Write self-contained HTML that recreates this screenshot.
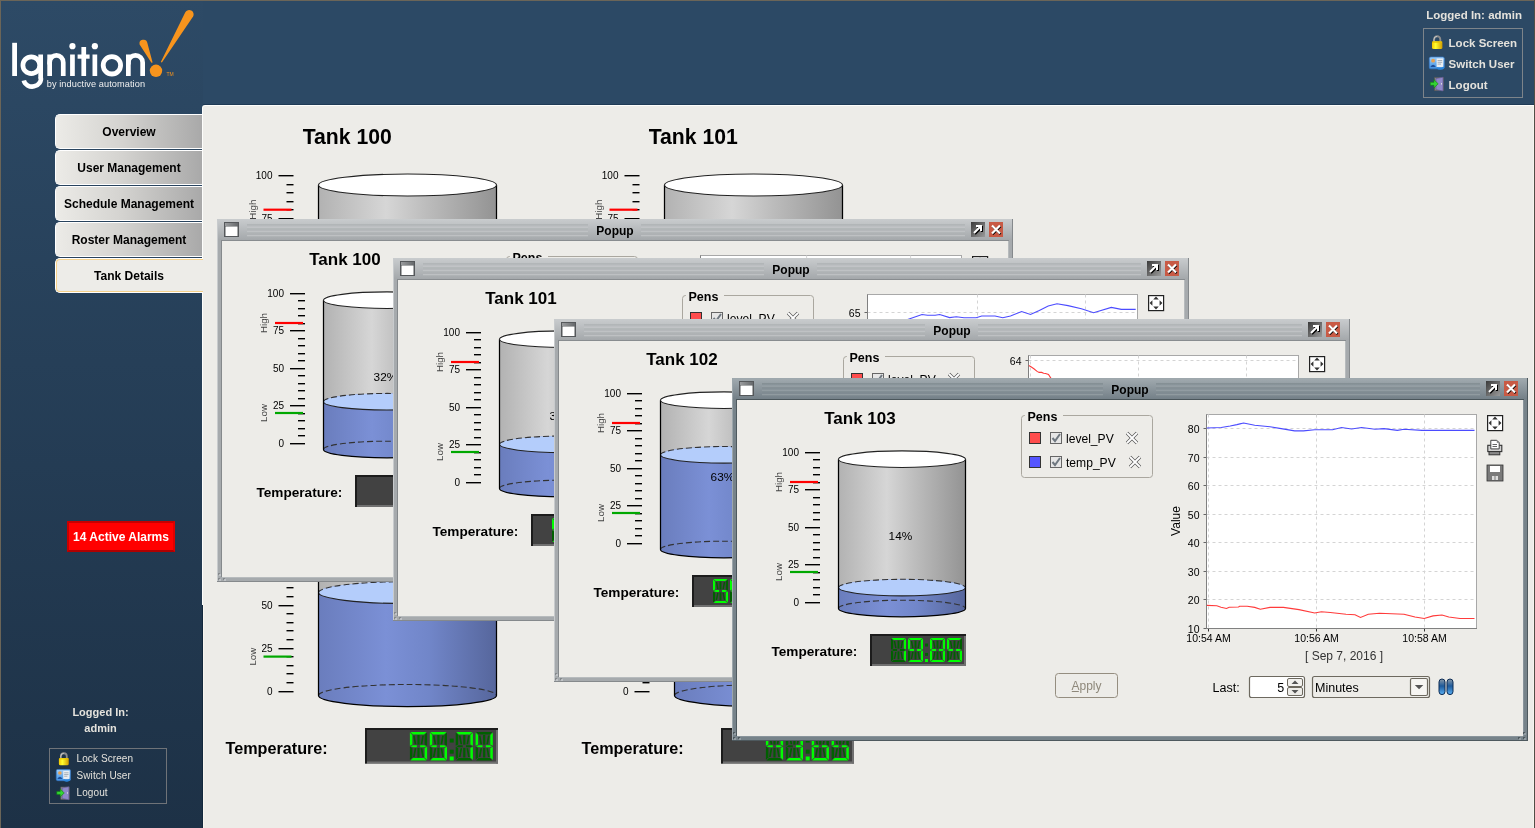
<!DOCTYPE html><html><head><meta charset="utf-8"><style>html,body{margin:0;padding:0;} svg,div{will-change:transform;}body{width:1535px;height:828px;overflow:hidden;position:relative;background:#2c4965;font-family:"Liberation Sans", sans-serif;}</style></head><body><div style="position:absolute;left:0;top:0;width:1535px;height:828px;background:linear-gradient(to bottom,#2d4a66 0px,#1d3146 828px)"></div><div style="position:absolute;left:203px;top:0;width:1332px;height:105px;background:#2c4965"></div><div style="position:absolute;left:0;top:0;width:1535px;height:1px;background:#6b6558"></div><div style="position:absolute;left:0;top:0;width:1px;height:828px;background:#6b6558"></div><div style="position:absolute;left:1534px;top:0;width:1px;height:828px;background:#524e46"></div><div style="position:absolute;left:203px;top:104px;width:1331px;height:1px;background:#1f3a55"></div><div style="position:absolute;left:202px;top:105px;width:1332px;height:723px;background:#fdfdfb;border-top-left-radius:3px"></div><div style="position:absolute;left:203px;top:106px;width:1330px;height:722px;background:#edece8;border-top-left-radius:2px"></div><div style="position:absolute;left:202px;top:605px;width:1px;height:223px;background:#13283c"></div><div style="position:absolute;left:203px;top:605px;width:1px;height:223px;background:#f8f5ef"></div><div style="position:absolute;left:1533px;top:106px;width:1px;height:722px;background:#f6f4ef"></div><svg style="position:absolute;left:0;top:0" width="210" height="100" font-family='"Liberation Sans", sans-serif'><rect x="12.2" y="42.8" width="4.8" height="33.2" fill="#ffffff"/><circle cx="31.3" cy="65.2" r="8.4" fill="none" stroke="#ffffff" stroke-width="4.7"/><rect x="38.3" y="54.5" width="4.7" height="24" fill="#ffffff"/><path d="M40.65,77 A8.4,7.6 0 0 1 23.8,80.5" fill="none" stroke="#ffffff" stroke-width="4.6"/><path d="M49.65,76 V62.5 A6.8,7.2 0 0 1 63.25,62.5 V76" fill="none" stroke="#ffffff" stroke-width="4.7"/><rect x="47.3" y="54.5" width="4.7" height="10" fill="#ffffff"/><rect x="70.1" y="54.5" width="4.7" height="21.5" fill="#ffffff"/><circle cx="72.45" cy="46.2" r="3.1" fill="#ffffff"/><rect x="81.4" y="47" width="4.7" height="29" fill="#ffffff"/><rect x="77.6" y="54.5" width="12" height="4.2" fill="#ffffff"/><rect x="92.5" y="54.5" width="4.7" height="21.5" fill="#ffffff"/><circle cx="94.85" cy="46.2" r="3.1" fill="#ffffff"/><circle cx="111.9" cy="65.3" r="8.7" fill="none" stroke="#ffffff" stroke-width="4.8"/><path d="M128.35,76 V62.5 A7.15,7.2 0 0 1 142.65,62.5 V76" fill="none" stroke="#ffffff" stroke-width="4.7"/><rect x="126" y="54.5" width="4.7" height="10" fill="#ffffff"/><path d="M139.6,44.5 A3.9,3.9 0 0 1 147.3,42.8 L152.6,62.5 L151.4,62.7 Z" fill="#f7941d"/><path d="M185.3,12.3 A4.3,4.3 0 0 1 193.1,16.6 L161.9,62.6 L160.8,62.1 Z" fill="#f7941d"/><circle cx="156" cy="70.8" r="6.2" fill="#f7941d"/><text x="166.5" y="76" font-size="5" fill="#f7941d">TM</text><text x="46.7" y="87" font-size="9.2" fill="#f0f0f0" textLength="98.3" lengthAdjust="spacing">by inductive automation</text></svg><div style="position:absolute;left:55px;top:114px;width:146px;height:33px;border:1px solid #fff;border-right:none;border-radius:5px 0 0 5px;background:linear-gradient(to right,#ecebe7 0%,#d4d3d0 45%,#a9a9a9 100%)"></div><div style="position:absolute;left:55px;top:114px;width:148px;height:35px;line-height:37px;text-align:center;font-weight:bold;font-size:12px;color:#000">Overview</div><div style="position:absolute;left:55px;top:150px;width:146px;height:33px;border:1px solid #fff;border-right:none;border-radius:5px 0 0 5px;background:linear-gradient(to right,#ecebe7 0%,#d4d3d0 45%,#a9a9a9 100%)"></div><div style="position:absolute;left:55px;top:150px;width:148px;height:35px;line-height:37px;text-align:center;font-weight:bold;font-size:12px;color:#000">User Management</div><div style="position:absolute;left:55px;top:186px;width:146px;height:33px;border:1px solid #fff;border-right:none;border-radius:5px 0 0 5px;background:linear-gradient(to right,#ecebe7 0%,#d4d3d0 45%,#a9a9a9 100%)"></div><div style="position:absolute;left:55px;top:186px;width:148px;height:35px;line-height:37px;text-align:center;font-weight:bold;font-size:12px;color:#000">Schedule Management</div><div style="position:absolute;left:55px;top:222px;width:146px;height:33px;border:1px solid #fff;border-right:none;border-radius:5px 0 0 5px;background:linear-gradient(to right,#ecebe7 0%,#d4d3d0 45%,#a9a9a9 100%)"></div><div style="position:absolute;left:55px;top:222px;width:148px;height:35px;line-height:37px;text-align:center;font-weight:bold;font-size:12px;color:#000">Roster Management</div><div style="position:absolute;left:55px;top:258px;width:147px;height:33px;border:1px solid #fff;border-right:none;border-radius:5px 0 0 5px;background:#edece8"></div><div style="position:absolute;left:56px;top:259px;width:146px;height:31px;border:1px solid #f6d28c;border-right:none;border-radius:4px 0 0 4px;"></div><div style="position:absolute;left:55px;top:258px;width:148px;height:35px;line-height:37px;text-align:center;font-weight:bold;font-size:12px;color:#000">Tank Details</div><div style="position:absolute;left:67px;top:521px;width:104px;height:27px;background:#ff0000;border:2px solid #c80000;border-right-color:#e00000;border-bottom-color:#b00000"></div><div style="position:absolute;left:67px;top:522px;width:108px;height:31px;line-height:31px;text-align:center;font-weight:bold;font-size:12px;color:#fff">14 Active Alarms</div><div style="position:absolute;left:50px;top:705px;width:101px;text-align:center;font-weight:bold;font-size:11px;line-height:15.5px;color:#e4e2dc">Logged In:<br>admin</div><div style="position:absolute;left:49px;top:748px;width:116px;height:54px;border:1px solid #6f7378"></div><svg style="position:absolute;left:0;top:700px" width="210" height="110" font-family='"Liberation Sans", sans-serif'><g transform="translate(58.6,52) scale(0.95)"><defs><linearGradient id="lk1" x1="0" y1="0" x2="1" y2="0"><stop offset="0" stop-color="#f5c800"/><stop offset="0.35" stop-color="#ffff30"/><stop offset="1" stop-color="#d09a00"/></linearGradient></defs><path d="M2.4,7.5 V4.6 A3.1,3.3 0 0 1 8.6,4.6 V7.5" fill="none" stroke="#8c8c8c" stroke-width="1.9"/><path d="M2.2,6 V4.6 A3.1,3.3 0 0 1 5.5,1.4" fill="none" stroke="#e0e0e0" stroke-width="0.7"/><rect x="0.3" y="6.3" width="10.4" height="7.7" rx="1.6" fill="url(#lk1)"/><rect x="0.3" y="6.3" width="10.4" height="1.6" rx="0.8" fill="#e8c000" opacity="0.7"/></g><g transform="translate(56,69) scale(0.95)"><defs><linearGradient id="sw2" x1="0" y1="0" x2="0" y2="1"><stop offset="0" stop-color="#9fd0fb"/><stop offset="1" stop-color="#3f8fe0"/></linearGradient></defs><rect x="0.3" y="0.5" width="15" height="11.8" rx="1.5" fill="url(#sw2)" stroke="#3a7cc8" stroke-width="0.7"/><rect x="7.6" y="2" width="6.6" height="8.5" fill="#e9eef3"/><path d="M8.6,4 h4.6 M8.6,5.8 h4.6 M8.6,7.6 h3.4" stroke="#8794a0" stroke-width="0.7"/><circle cx="4.1" cy="4.2" r="1.9" fill="#e8a050"/><path d="M1.4,10.5 Q4.1,5.8 6.8,10.5 z" fill="#1e4f9a"/><path d="M8.2,11.2 A3.6,3 0 0 0 14.6,10.6" fill="none" stroke="#2a86dc" stroke-width="1.6"/></g><g transform="translate(56.5,86.5) scale(0.95)"><rect x="4.5" y="0.5" width="9" height="13.2" fill="#8a8a8a" stroke="#555" stroke-width="0.6"/><path d="M6,1.6 L13,0.2 V14 L6,12.6 z" fill="#9088c8" stroke="#5a5590" stroke-width="0.6"/><rect x="11" y="6" width="1" height="1.6" fill="#ddd"/><path d="M0.3,5.3 h3.6 v-2.6 l4.3,4.1 l-4.3,4.1 v-2.6 h-3.6 z" fill="#33d433" stroke="#0f7f0f" stroke-width="0.6"/></g><text x="76.5" y="61.8" font-size="10" text-anchor="start" font-weight="normal" fill="#e4e2dc" letter-spacing="0.1">Lock Screen</text><text x="76.5" y="78.8" font-size="10" text-anchor="start" font-weight="normal" fill="#e4e2dc" letter-spacing="0.1">Switch User</text><text x="76.5" y="95.6" font-size="10" text-anchor="start" font-weight="normal" fill="#e4e2dc" letter-spacing="0.1">Logout</text></svg><div style="position:absolute;left:1400px;top:8px;width:122px;text-align:right;font-weight:bold;font-size:11.5px;line-height:15px;color:#e4e2dc">Logged In: admin</div><div style="position:absolute;left:1423px;top:28px;width:98px;height:68px;border:1px solid #7d848a"></div><svg style="position:absolute;left:1400px;top:0" width="135" height="105" font-family='"Liberation Sans", sans-serif'><g transform="translate(31.7,35) scale(1)"><defs><linearGradient id="lk3" x1="0" y1="0" x2="1" y2="0"><stop offset="0" stop-color="#f5c800"/><stop offset="0.35" stop-color="#ffff30"/><stop offset="1" stop-color="#d09a00"/></linearGradient></defs><path d="M2.4,7.5 V4.6 A3.1,3.3 0 0 1 8.6,4.6 V7.5" fill="none" stroke="#8c8c8c" stroke-width="1.9"/><path d="M2.2,6 V4.6 A3.1,3.3 0 0 1 5.5,1.4" fill="none" stroke="#e0e0e0" stroke-width="0.7"/><rect x="0.3" y="6.3" width="10.4" height="7.7" rx="1.6" fill="url(#lk3)"/><rect x="0.3" y="6.3" width="10.4" height="1.6" rx="0.8" fill="#e8c000" opacity="0.7"/></g><g transform="translate(29,56.5) scale(1)"><defs><linearGradient id="sw4" x1="0" y1="0" x2="0" y2="1"><stop offset="0" stop-color="#9fd0fb"/><stop offset="1" stop-color="#3f8fe0"/></linearGradient></defs><rect x="0.3" y="0.5" width="15" height="11.8" rx="1.5" fill="url(#sw4)" stroke="#3a7cc8" stroke-width="0.7"/><rect x="7.6" y="2" width="6.6" height="8.5" fill="#e9eef3"/><path d="M8.6,4 h4.6 M8.6,5.8 h4.6 M8.6,7.6 h3.4" stroke="#8794a0" stroke-width="0.7"/><circle cx="4.1" cy="4.2" r="1.9" fill="#e8a050"/><path d="M1.4,10.5 Q4.1,5.8 6.8,10.5 z" fill="#1e4f9a"/><path d="M8.2,11.2 A3.6,3 0 0 0 14.6,10.6" fill="none" stroke="#2a86dc" stroke-width="1.6"/></g><g transform="translate(30,77) scale(1)"><rect x="4.5" y="0.5" width="9" height="13.2" fill="#8a8a8a" stroke="#555" stroke-width="0.6"/><path d="M6,1.6 L13,0.2 V14 L6,12.6 z" fill="#9088c8" stroke="#5a5590" stroke-width="0.6"/><rect x="11" y="6" width="1" height="1.6" fill="#ddd"/><path d="M0.3,5.3 h3.6 v-2.6 l4.3,4.1 l-4.3,4.1 v-2.6 h-3.6 z" fill="#33d433" stroke="#0f7f0f" stroke-width="0.6"/></g><text x="48.6" y="47" font-size="11.5" text-anchor="start" font-weight="bold" fill="#e4e2dc">Lock Screen</text><text x="48.6" y="68" font-size="11.5" text-anchor="start" font-weight="bold" fill="#e4e2dc">Switch User</text><text x="48.6" y="89" font-size="11.5" text-anchor="start" font-weight="bold" fill="#e4e2dc">Logout</text></svg><svg style="position:absolute;left:0;top:0" width="1535" height="828" font-family='"Liberation Sans", sans-serif'><defs><clipPath id="mc"><rect x="203" y="106" width="1330" height="722"/></clipPath></defs><g clip-path="url(#mc)"><text x="347.2" y="144" font-size="21.2" text-anchor="middle" font-weight="bold" fill="#000">Tank 100</text><rect x="278.5" y="347" width="15" height="1.4" fill="#000"/><text x="272.5" y="350.9" font-size="10" text-anchor="end" fill="#000">0</text><rect x="286.5" y="338" width="7" height="1.4" fill="#000"/><rect x="286.5" y="330" width="7" height="1.4" fill="#000"/><rect x="286.5" y="321" width="7" height="1.4" fill="#000"/><rect x="286.5" y="313" width="7" height="1.4" fill="#000"/><rect x="278.5" y="304" width="15" height="1.4" fill="#000"/><text x="272.5" y="307.9" font-size="10" text-anchor="end" fill="#000">25</text><rect x="286.5" y="295" width="7" height="1.4" fill="#000"/><rect x="286.5" y="287" width="7" height="1.4" fill="#000"/><rect x="286.5" y="278" width="7" height="1.4" fill="#000"/><rect x="286.5" y="270" width="7" height="1.4" fill="#000"/><rect x="278.5" y="261" width="15" height="1.4" fill="#000"/><text x="272.5" y="264.9" font-size="10" text-anchor="end" fill="#000">50</text><rect x="286.5" y="252" width="7" height="1.4" fill="#000"/><rect x="286.5" y="244" width="7" height="1.4" fill="#000"/><rect x="286.5" y="235" width="7" height="1.4" fill="#000"/><rect x="286.5" y="227" width="7" height="1.4" fill="#000"/><rect x="278.5" y="218" width="15" height="1.4" fill="#000"/><text x="272.5" y="221.9" font-size="10" text-anchor="end" fill="#000">75</text><rect x="286.5" y="209" width="7" height="1.4" fill="#000"/><rect x="286.5" y="201" width="7" height="1.4" fill="#000"/><rect x="286.5" y="192" width="7" height="1.4" fill="#000"/><rect x="286.5" y="184" width="7" height="1.4" fill="#000"/><rect x="278.5" y="175" width="15" height="1.4" fill="#000"/><text x="272.5" y="178.9" font-size="10" text-anchor="end" fill="#000">100</text><rect x="263.5" y="208.6" width="28" height="2.2" fill="#ff0000"/><rect x="263.5" y="311.8" width="28" height="2.2" fill="#00a800"/><text transform="translate(255.5,209.7) rotate(-90)" font-size="9.8" text-anchor="middle" fill="#444">High</text><text transform="translate(255.5,312.9) rotate(-90)" font-size="9.8" text-anchor="middle" fill="#444">Low</text><defs><linearGradient id="tg5" x1="0" x2="1" y1="0" y2="0"><stop offset="0" stop-color="#b2b2b2"/><stop offset="0.38" stop-color="#d6d6d6"/><stop offset="0.6" stop-color="#bdbdbd"/><stop offset="1" stop-color="#939393"/></linearGradient><linearGradient id="tb6" x1="0" x2="1" y1="0" y2="0"><stop offset="0" stop-color="#6a7dbd"/><stop offset="0.38" stop-color="#7b90d6"/><stop offset="0.62" stop-color="#7186c9"/><stop offset="1" stop-color="#56669c"/></linearGradient></defs><path d="M318.5,185 L318.5,351.8 A89,11 0 0 0 496.5,351.8 L496.5,185 Z" fill="url(#tg5)"/><path d="M318.5,268.4 L318.5,351.8 A89,11 0 0 0 496.5,351.8 L496.5,268.4 A89,11 0 0 0 318.5,268.4 Z" fill="url(#tb6)"/><ellipse cx="407.5" cy="268.4" rx="89" ry="11" fill="#b4cdfb"/><path d="M318.5,268.4 A89,11 0 0 0 496.5,268.4" fill="none" stroke="#222" stroke-width="1.1"/><path d="M318.5,268.4 A89,11 0 0 1 496.5,268.4" fill="none" stroke="#333" stroke-width="1.1" stroke-dasharray="6,3"/><path d="M318.5,351.8 A89,11 0 0 1 496.5,351.8" fill="none" stroke="#333" stroke-width="1.1" stroke-dasharray="6,3"/><path d="M318.5,185 L318.5,351.8 A89,11 0 0 0 496.5,351.8 L496.5,185" fill="none" stroke="#000" stroke-width="1.25"/><ellipse cx="407.5" cy="185" rx="89" ry="11" fill="#fff" stroke="#222" stroke-width="1.1"/><text x="225.5" y="410" font-size="16.2" text-anchor="start" font-weight="bold" fill="#000">Temperature:</text><rect x="365" y="384.3" width="133" height="35.5" fill="#424242"/><rect x="365" y="384.3" width="133" height="2" fill="#1c1c1c"/><rect x="365" y="384.3" width="2" height="35.5" fill="#1c1c1c"/><rect x="367" y="417.8" width="131" height="2" fill="#707070"/><rect x="496" y="386.3" width="2" height="33.5" fill="#707070"/><polygon points="410.42,388.3 426.58,388.3 424.09,390.81 412.91,390.81" fill="#00ff00"/><polygon points="412.91,414.29 424.09,414.29 426.58,416.8 410.42,416.8" fill="#00ff00"/><polygon points="409.9,388.82 412.39,391.32 412.39,400.78 409.9,402.03" fill="#00ff00"/><polygon points="409.9,403.07 412.39,404.32 412.39,413.78 409.9,416.28" fill="#006000"/><polygon points="427.1,388.82 424.61,391.32 424.61,400.78 427.1,402.03" fill="#006000"/><polygon points="427.1,403.07 424.61,404.32 424.61,413.78 427.1,416.28" fill="#00ff00"/><polygon points="410.42,402.55 412.91,401.48 416.87,401.48 416.87,403.62 412.91,403.62" fill="#00ff00"/><polygon points="426.58,402.55 424.09,401.48 420.13,401.48 420.13,403.62 424.09,403.62" fill="#00ff00"/><polygon points="417.38,391.32 419.62,391.32 419.62,400.97 417.38,400.97" fill="#006000"/><polygon points="417.38,404.13 419.62,404.13 419.62,413.78 417.38,413.78" fill="#006000"/><polygon points="413.01,391.84 414.73,391.84 416.35,400.45 414.63,400.45" fill="#006000"/><polygon points="423.99,391.84 422.27,391.84 420.65,400.45 422.37,400.45" fill="#006000"/><polygon points="416.35,404.65 414.63,404.65 413.01,413.26 414.73,413.26" fill="#006000"/><polygon points="420.65,404.65 422.37,404.65 423.99,413.26 422.27,413.26" fill="#006000"/><polygon points="430.32,388.3 446.48,388.3 443.99,390.81 432.81,390.81" fill="#00ff00"/><polygon points="432.81,414.29 443.99,414.29 446.48,416.8 430.32,416.8" fill="#00ff00"/><polygon points="429.8,388.82 432.29,391.32 432.29,400.78 429.8,402.03" fill="#00ff00"/><polygon points="429.8,403.07 432.29,404.32 432.29,413.78 429.8,416.28" fill="#006000"/><polygon points="447,388.82 444.51,391.32 444.51,400.78 447,402.03" fill="#006000"/><polygon points="447,403.07 444.51,404.32 444.51,413.78 447,416.28" fill="#00ff00"/><polygon points="430.32,402.55 432.81,401.48 436.77,401.48 436.77,403.62 432.81,403.62" fill="#00ff00"/><polygon points="446.48,402.55 443.99,401.48 440.03,401.48 440.03,403.62 443.99,403.62" fill="#00ff00"/><polygon points="437.28,391.32 439.52,391.32 439.52,400.97 437.28,400.97" fill="#006000"/><polygon points="437.28,404.13 439.52,404.13 439.52,413.78 437.28,413.78" fill="#006000"/><polygon points="432.91,391.84 434.63,391.84 436.25,400.45 434.53,400.45" fill="#006000"/><polygon points="443.89,391.84 442.17,391.84 440.55,400.45 442.27,400.45" fill="#006000"/><polygon points="436.25,404.65 434.53,404.65 432.91,413.26 434.63,413.26" fill="#006000"/><polygon points="440.55,404.65 442.27,404.65 443.89,413.26 442.17,413.26" fill="#006000"/><rect x="449.7" y="394.86" width="4" height="4" fill="#006300"/><rect x="449.7" y="405.97" width="4" height="4" fill="#006300"/><rect x="449.7" y="412.8" width="4" height="4" fill="#00ff00"/><polygon points="456.22,388.3 472.38,388.3 469.89,390.81 458.71,390.81" fill="#00ff00"/><polygon points="458.71,414.29 469.89,414.29 472.38,416.8 456.22,416.8" fill="#006000"/><polygon points="455.7,388.82 458.19,391.32 458.19,400.78 455.7,402.03" fill="#006000"/><polygon points="455.7,403.07 458.19,404.32 458.19,413.78 455.7,416.28" fill="#006000"/><polygon points="472.9,388.82 470.41,391.32 470.41,400.78 472.9,402.03" fill="#00ff00"/><polygon points="472.9,403.07 470.41,404.32 470.41,413.78 472.9,416.28" fill="#00ff00"/><polygon points="456.22,402.55 458.71,401.48 462.67,401.48 462.67,403.62 458.71,403.62" fill="#006000"/><polygon points="472.38,402.55 469.89,401.48 465.93,401.48 465.93,403.62 469.89,403.62" fill="#006000"/><polygon points="463.18,391.32 465.42,391.32 465.42,400.97 463.18,400.97" fill="#006000"/><polygon points="463.18,404.13 465.42,404.13 465.42,413.78 463.18,413.78" fill="#006000"/><polygon points="458.81,391.84 460.53,391.84 462.15,400.45 460.43,400.45" fill="#006000"/><polygon points="469.79,391.84 468.07,391.84 466.45,400.45 468.17,400.45" fill="#006000"/><polygon points="462.15,404.65 460.43,404.65 458.81,413.26 460.53,413.26" fill="#006000"/><polygon points="466.45,404.65 468.17,404.65 469.79,413.26 468.07,413.26" fill="#006000"/><polygon points="476.12,388.3 492.28,388.3 489.79,390.81 478.61,390.81" fill="#006000"/><polygon points="478.61,414.29 489.79,414.29 492.28,416.8 476.12,416.8" fill="#006000"/><polygon points="475.6,388.82 478.09,391.32 478.09,400.78 475.6,402.03" fill="#00ff00"/><polygon points="475.6,403.07 478.09,404.32 478.09,413.78 475.6,416.28" fill="#006000"/><polygon points="492.8,388.82 490.31,391.32 490.31,400.78 492.8,402.03" fill="#00ff00"/><polygon points="492.8,403.07 490.31,404.32 490.31,413.78 492.8,416.28" fill="#00ff00"/><polygon points="476.12,402.55 478.61,401.48 482.57,401.48 482.57,403.62 478.61,403.62" fill="#00ff00"/><polygon points="492.28,402.55 489.79,401.48 485.83,401.48 485.83,403.62 489.79,403.62" fill="#00ff00"/><polygon points="483.08,391.32 485.32,391.32 485.32,400.97 483.08,400.97" fill="#006000"/><polygon points="483.08,404.13 485.32,404.13 485.32,413.78 483.08,413.78" fill="#006000"/><polygon points="478.71,391.84 480.43,391.84 482.05,400.45 480.33,400.45" fill="#006000"/><polygon points="489.69,391.84 487.97,391.84 486.35,400.45 488.07,400.45" fill="#006000"/><polygon points="482.05,404.65 480.33,404.65 478.71,413.26 480.43,413.26" fill="#006000"/><polygon points="486.35,404.65 488.07,404.65 489.69,413.26 487.97,413.26" fill="#006000"/><text x="693.2" y="144" font-size="21.2" text-anchor="middle" font-weight="bold" fill="#000">Tank 101</text><rect x="624.5" y="347" width="15" height="1.4" fill="#000"/><text x="618.5" y="350.9" font-size="10" text-anchor="end" fill="#000">0</text><rect x="632.5" y="338" width="7" height="1.4" fill="#000"/><rect x="632.5" y="330" width="7" height="1.4" fill="#000"/><rect x="632.5" y="321" width="7" height="1.4" fill="#000"/><rect x="632.5" y="313" width="7" height="1.4" fill="#000"/><rect x="624.5" y="304" width="15" height="1.4" fill="#000"/><text x="618.5" y="307.9" font-size="10" text-anchor="end" fill="#000">25</text><rect x="632.5" y="295" width="7" height="1.4" fill="#000"/><rect x="632.5" y="287" width="7" height="1.4" fill="#000"/><rect x="632.5" y="278" width="7" height="1.4" fill="#000"/><rect x="632.5" y="270" width="7" height="1.4" fill="#000"/><rect x="624.5" y="261" width="15" height="1.4" fill="#000"/><text x="618.5" y="264.9" font-size="10" text-anchor="end" fill="#000">50</text><rect x="632.5" y="252" width="7" height="1.4" fill="#000"/><rect x="632.5" y="244" width="7" height="1.4" fill="#000"/><rect x="632.5" y="235" width="7" height="1.4" fill="#000"/><rect x="632.5" y="227" width="7" height="1.4" fill="#000"/><rect x="624.5" y="218" width="15" height="1.4" fill="#000"/><text x="618.5" y="221.9" font-size="10" text-anchor="end" fill="#000">75</text><rect x="632.5" y="209" width="7" height="1.4" fill="#000"/><rect x="632.5" y="201" width="7" height="1.4" fill="#000"/><rect x="632.5" y="192" width="7" height="1.4" fill="#000"/><rect x="632.5" y="184" width="7" height="1.4" fill="#000"/><rect x="624.5" y="175" width="15" height="1.4" fill="#000"/><text x="618.5" y="178.9" font-size="10" text-anchor="end" fill="#000">100</text><rect x="609.5" y="208.6" width="28" height="2.2" fill="#ff0000"/><rect x="609.5" y="311.8" width="28" height="2.2" fill="#00a800"/><text transform="translate(601.5,209.7) rotate(-90)" font-size="9.8" text-anchor="middle" fill="#444">High</text><text transform="translate(601.5,312.9) rotate(-90)" font-size="9.8" text-anchor="middle" fill="#444">Low</text><defs><linearGradient id="tg7" x1="0" x2="1" y1="0" y2="0"><stop offset="0" stop-color="#b2b2b2"/><stop offset="0.38" stop-color="#d6d6d6"/><stop offset="0.6" stop-color="#bdbdbd"/><stop offset="1" stop-color="#939393"/></linearGradient><linearGradient id="tb8" x1="0" x2="1" y1="0" y2="0"><stop offset="0" stop-color="#6a7dbd"/><stop offset="0.38" stop-color="#7b90d6"/><stop offset="0.62" stop-color="#7186c9"/><stop offset="1" stop-color="#56669c"/></linearGradient></defs><path d="M664.5,185 L664.5,351.8 A89,11 0 0 0 842.5,351.8 L842.5,185 Z" fill="url(#tg7)"/><path d="M664.5,268.4 L664.5,351.8 A89,11 0 0 0 842.5,351.8 L842.5,268.4 A89,11 0 0 0 664.5,268.4 Z" fill="url(#tb8)"/><ellipse cx="753.5" cy="268.4" rx="89" ry="11" fill="#b4cdfb"/><path d="M664.5,268.4 A89,11 0 0 0 842.5,268.4" fill="none" stroke="#222" stroke-width="1.1"/><path d="M664.5,268.4 A89,11 0 0 1 842.5,268.4" fill="none" stroke="#333" stroke-width="1.1" stroke-dasharray="6,3"/><path d="M664.5,351.8 A89,11 0 0 1 842.5,351.8" fill="none" stroke="#333" stroke-width="1.1" stroke-dasharray="6,3"/><path d="M664.5,185 L664.5,351.8 A89,11 0 0 0 842.5,351.8 L842.5,185" fill="none" stroke="#000" stroke-width="1.25"/><ellipse cx="753.5" cy="185" rx="89" ry="11" fill="#fff" stroke="#222" stroke-width="1.1"/><text x="571.5" y="410" font-size="16.2" text-anchor="start" font-weight="bold" fill="#000">Temperature:</text><rect x="711" y="384.3" width="133" height="35.5" fill="#424242"/><rect x="711" y="384.3" width="133" height="2" fill="#1c1c1c"/><rect x="711" y="384.3" width="2" height="35.5" fill="#1c1c1c"/><rect x="713" y="417.8" width="131" height="2" fill="#707070"/><rect x="842" y="386.3" width="2" height="33.5" fill="#707070"/><polygon points="756.42,388.3 772.58,388.3 770.09,390.81 758.91,390.81" fill="#006000"/><polygon points="758.91,414.29 770.09,414.29 772.58,416.8 756.42,416.8" fill="#006000"/><polygon points="755.9,388.82 758.39,391.32 758.39,400.78 755.9,402.03" fill="#00ff00"/><polygon points="755.9,403.07 758.39,404.32 758.39,413.78 755.9,416.28" fill="#006000"/><polygon points="773.1,388.82 770.61,391.32 770.61,400.78 773.1,402.03" fill="#00ff00"/><polygon points="773.1,403.07 770.61,404.32 770.61,413.78 773.1,416.28" fill="#00ff00"/><polygon points="756.42,402.55 758.91,401.48 762.87,401.48 762.87,403.62 758.91,403.62" fill="#00ff00"/><polygon points="772.58,402.55 770.09,401.48 766.13,401.48 766.13,403.62 770.09,403.62" fill="#00ff00"/><polygon points="763.38,391.32 765.62,391.32 765.62,400.97 763.38,400.97" fill="#006000"/><polygon points="763.38,404.13 765.62,404.13 765.62,413.78 763.38,413.78" fill="#006000"/><polygon points="759.01,391.84 760.73,391.84 762.35,400.45 760.63,400.45" fill="#006000"/><polygon points="769.99,391.84 768.27,391.84 766.65,400.45 768.37,400.45" fill="#006000"/><polygon points="762.35,404.65 760.63,404.65 759.01,413.26 760.73,413.26" fill="#006000"/><polygon points="766.65,404.65 768.37,404.65 769.99,413.26 768.27,413.26" fill="#006000"/><polygon points="776.32,388.3 792.48,388.3 789.99,390.81 778.81,390.81" fill="#00ff00"/><polygon points="778.81,414.29 789.99,414.29 792.48,416.8 776.32,416.8" fill="#00ff00"/><polygon points="775.8,388.82 778.29,391.32 778.29,400.78 775.8,402.03" fill="#006000"/><polygon points="775.8,403.07 778.29,404.32 778.29,413.78 775.8,416.28" fill="#006000"/><polygon points="793,388.82 790.51,391.32 790.51,400.78 793,402.03" fill="#00ff00"/><polygon points="793,403.07 790.51,404.32 790.51,413.78 793,416.28" fill="#00ff00"/><polygon points="776.32,402.55 778.81,401.48 782.77,401.48 782.77,403.62 778.81,403.62" fill="#006000"/><polygon points="792.48,402.55 789.99,401.48 786.03,401.48 786.03,403.62 789.99,403.62" fill="#00ff00"/><polygon points="783.28,391.32 785.52,391.32 785.52,400.97 783.28,400.97" fill="#006000"/><polygon points="783.28,404.13 785.52,404.13 785.52,413.78 783.28,413.78" fill="#006000"/><polygon points="778.91,391.84 780.63,391.84 782.25,400.45 780.53,400.45" fill="#006000"/><polygon points="789.89,391.84 788.17,391.84 786.55,400.45 788.27,400.45" fill="#006000"/><polygon points="782.25,404.65 780.53,404.65 778.91,413.26 780.63,413.26" fill="#006000"/><polygon points="786.55,404.65 788.27,404.65 789.89,413.26 788.17,413.26" fill="#006000"/><rect x="795.7" y="394.86" width="4" height="4" fill="#006300"/><rect x="795.7" y="405.97" width="4" height="4" fill="#006300"/><rect x="795.7" y="412.8" width="4" height="4" fill="#00ff00"/><polygon points="802.22,388.3 818.38,388.3 815.89,390.81 804.71,390.81" fill="#00ff00"/><polygon points="804.71,414.29 815.89,414.29 818.38,416.8 802.22,416.8" fill="#00ff00"/><polygon points="801.7,388.82 804.19,391.32 804.19,400.78 801.7,402.03" fill="#00ff00"/><polygon points="801.7,403.07 804.19,404.32 804.19,413.78 801.7,416.28" fill="#00ff00"/><polygon points="818.9,388.82 816.41,391.32 816.41,400.78 818.9,402.03" fill="#006000"/><polygon points="818.9,403.07 816.41,404.32 816.41,413.78 818.9,416.28" fill="#00ff00"/><polygon points="802.22,402.55 804.71,401.48 808.67,401.48 808.67,403.62 804.71,403.62" fill="#00ff00"/><polygon points="818.38,402.55 815.89,401.48 811.93,401.48 811.93,403.62 815.89,403.62" fill="#00ff00"/><polygon points="809.18,391.32 811.42,391.32 811.42,400.97 809.18,400.97" fill="#006000"/><polygon points="809.18,404.13 811.42,404.13 811.42,413.78 809.18,413.78" fill="#006000"/><polygon points="804.81,391.84 806.53,391.84 808.15,400.45 806.43,400.45" fill="#006000"/><polygon points="815.79,391.84 814.07,391.84 812.45,400.45 814.17,400.45" fill="#006000"/><polygon points="808.15,404.65 806.43,404.65 804.81,413.26 806.53,413.26" fill="#006000"/><polygon points="812.45,404.65 814.17,404.65 815.79,413.26 814.07,413.26" fill="#006000"/><polygon points="822.12,388.3 838.28,388.3 835.79,390.81 824.61,390.81" fill="#00ff00"/><polygon points="824.61,414.29 835.79,414.29 838.28,416.8 822.12,416.8" fill="#00ff00"/><polygon points="821.6,388.82 824.09,391.32 824.09,400.78 821.6,402.03" fill="#00ff00"/><polygon points="821.6,403.07 824.09,404.32 824.09,413.78 821.6,416.28" fill="#006000"/><polygon points="838.8,388.82 836.31,391.32 836.31,400.78 838.8,402.03" fill="#006000"/><polygon points="838.8,403.07 836.31,404.32 836.31,413.78 838.8,416.28" fill="#00ff00"/><polygon points="822.12,402.55 824.61,401.48 828.57,401.48 828.57,403.62 824.61,403.62" fill="#00ff00"/><polygon points="838.28,402.55 835.79,401.48 831.83,401.48 831.83,403.62 835.79,403.62" fill="#00ff00"/><polygon points="829.08,391.32 831.32,391.32 831.32,400.97 829.08,400.97" fill="#006000"/><polygon points="829.08,404.13 831.32,404.13 831.32,413.78 829.08,413.78" fill="#006000"/><polygon points="824.71,391.84 826.43,391.84 828.05,400.45 826.33,400.45" fill="#006000"/><polygon points="835.69,391.84 833.97,391.84 832.35,400.45 834.07,400.45" fill="#006000"/><polygon points="828.05,404.65 826.33,404.65 824.71,413.26 826.43,413.26" fill="#006000"/><polygon points="832.35,404.65 834.07,404.65 835.69,413.26 833.97,413.26" fill="#006000"/><text x="347.2" y="487.7" font-size="21.2" text-anchor="middle" font-weight="bold" fill="#000">Tank 102</text><rect x="278.5" y="691" width="15" height="1.4" fill="#000"/><text x="272.5" y="694.6" font-size="10" text-anchor="end" fill="#000">0</text><rect x="286.5" y="682" width="7" height="1.4" fill="#000"/><rect x="286.5" y="673" width="7" height="1.4" fill="#000"/><rect x="286.5" y="665" width="7" height="1.4" fill="#000"/><rect x="286.5" y="656" width="7" height="1.4" fill="#000"/><rect x="278.5" y="648" width="15" height="1.4" fill="#000"/><text x="272.5" y="651.6" font-size="10" text-anchor="end" fill="#000">25</text><rect x="286.5" y="639" width="7" height="1.4" fill="#000"/><rect x="286.5" y="630" width="7" height="1.4" fill="#000"/><rect x="286.5" y="622" width="7" height="1.4" fill="#000"/><rect x="286.5" y="613" width="7" height="1.4" fill="#000"/><rect x="278.5" y="605" width="15" height="1.4" fill="#000"/><text x="272.5" y="608.6" font-size="10" text-anchor="end" fill="#000">50</text><rect x="286.5" y="596" width="7" height="1.4" fill="#000"/><rect x="286.5" y="587" width="7" height="1.4" fill="#000"/><rect x="286.5" y="579" width="7" height="1.4" fill="#000"/><rect x="286.5" y="570" width="7" height="1.4" fill="#000"/><rect x="278.5" y="562" width="15" height="1.4" fill="#000"/><text x="272.5" y="565.6" font-size="10" text-anchor="end" fill="#000">75</text><rect x="286.5" y="553" width="7" height="1.4" fill="#000"/><rect x="286.5" y="544" width="7" height="1.4" fill="#000"/><rect x="286.5" y="536" width="7" height="1.4" fill="#000"/><rect x="286.5" y="527" width="7" height="1.4" fill="#000"/><rect x="278.5" y="519" width="15" height="1.4" fill="#000"/><text x="272.5" y="522.6" font-size="10" text-anchor="end" fill="#000">100</text><rect x="263.5" y="552.3" width="28" height="2.2" fill="#ff0000"/><rect x="263.5" y="655.5" width="28" height="2.2" fill="#00a800"/><text transform="translate(255.5,553.4) rotate(-90)" font-size="9.8" text-anchor="middle" fill="#444">High</text><text transform="translate(255.5,656.6) rotate(-90)" font-size="9.8" text-anchor="middle" fill="#444">Low</text><defs><linearGradient id="tg9" x1="0" x2="1" y1="0" y2="0"><stop offset="0" stop-color="#b2b2b2"/><stop offset="0.38" stop-color="#d6d6d6"/><stop offset="0.6" stop-color="#bdbdbd"/><stop offset="1" stop-color="#939393"/></linearGradient><linearGradient id="tb10" x1="0" x2="1" y1="0" y2="0"><stop offset="0" stop-color="#6a7dbd"/><stop offset="0.38" stop-color="#7b90d6"/><stop offset="0.62" stop-color="#7186c9"/><stop offset="1" stop-color="#56669c"/></linearGradient></defs><path d="M318.5,528.7 L318.5,695.5 A89,11 0 0 0 496.5,695.5 L496.5,528.7 Z" fill="url(#tg9)"/><path d="M318.5,592.58 L318.5,695.5 A89,11 0 0 0 496.5,695.5 L496.5,592.58 A89,11 0 0 0 318.5,592.58 Z" fill="url(#tb10)"/><ellipse cx="407.5" cy="592.58" rx="89" ry="11" fill="#b4cdfb"/><path d="M318.5,592.58 A89,11 0 0 0 496.5,592.58" fill="none" stroke="#222" stroke-width="1.1"/><path d="M318.5,592.58 A89,11 0 0 1 496.5,592.58" fill="none" stroke="#333" stroke-width="1.1" stroke-dasharray="6,3"/><path d="M318.5,695.5 A89,11 0 0 1 496.5,695.5" fill="none" stroke="#333" stroke-width="1.1" stroke-dasharray="6,3"/><path d="M318.5,528.7 L318.5,695.5 A89,11 0 0 0 496.5,695.5 L496.5,528.7" fill="none" stroke="#000" stroke-width="1.25"/><ellipse cx="407.5" cy="528.7" rx="89" ry="11" fill="#fff" stroke="#222" stroke-width="1.1"/><text x="225.5" y="753.7" font-size="16.2" text-anchor="start" font-weight="bold" fill="#000">Temperature:</text><rect x="365" y="728" width="133" height="35.5" fill="#424242"/><rect x="365" y="728" width="133" height="2" fill="#1c1c1c"/><rect x="365" y="728" width="2" height="35.5" fill="#1c1c1c"/><rect x="367" y="761.5" width="131" height="2" fill="#707070"/><rect x="496" y="730" width="2" height="33.5" fill="#707070"/><polygon points="410.42,732 426.58,732 424.09,734.51 412.91,734.51" fill="#00ff00"/><polygon points="412.91,757.99 424.09,757.99 426.58,760.5 410.42,760.5" fill="#00ff00"/><polygon points="409.9,732.52 412.39,735.02 412.39,744.48 409.9,745.73" fill="#00ff00"/><polygon points="409.9,746.77 412.39,748.02 412.39,757.48 409.9,759.98" fill="#006000"/><polygon points="427.1,732.52 424.61,735.02 424.61,744.48 427.1,745.73" fill="#006000"/><polygon points="427.1,746.77 424.61,748.02 424.61,757.48 427.1,759.98" fill="#00ff00"/><polygon points="410.42,746.25 412.91,745.18 416.87,745.18 416.87,747.32 412.91,747.32" fill="#00ff00"/><polygon points="426.58,746.25 424.09,745.18 420.13,745.18 420.13,747.32 424.09,747.32" fill="#00ff00"/><polygon points="417.38,735.02 419.62,735.02 419.62,744.67 417.38,744.67" fill="#006000"/><polygon points="417.38,747.83 419.62,747.83 419.62,757.48 417.38,757.48" fill="#006000"/><polygon points="413.01,735.54 414.73,735.54 416.35,744.15 414.63,744.15" fill="#006000"/><polygon points="423.99,735.54 422.27,735.54 420.65,744.15 422.37,744.15" fill="#006000"/><polygon points="416.35,748.35 414.63,748.35 413.01,756.96 414.73,756.96" fill="#006000"/><polygon points="420.65,748.35 422.37,748.35 423.99,756.96 422.27,756.96" fill="#006000"/><polygon points="430.32,732 446.48,732 443.99,734.51 432.81,734.51" fill="#00ff00"/><polygon points="432.81,757.99 443.99,757.99 446.48,760.5 430.32,760.5" fill="#00ff00"/><polygon points="429.8,732.52 432.29,735.02 432.29,744.48 429.8,745.73" fill="#00ff00"/><polygon points="429.8,746.77 432.29,748.02 432.29,757.48 429.8,759.98" fill="#006000"/><polygon points="447,732.52 444.51,735.02 444.51,744.48 447,745.73" fill="#006000"/><polygon points="447,746.77 444.51,748.02 444.51,757.48 447,759.98" fill="#00ff00"/><polygon points="430.32,746.25 432.81,745.18 436.77,745.18 436.77,747.32 432.81,747.32" fill="#00ff00"/><polygon points="446.48,746.25 443.99,745.18 440.03,745.18 440.03,747.32 443.99,747.32" fill="#00ff00"/><polygon points="437.28,735.02 439.52,735.02 439.52,744.67 437.28,744.67" fill="#006000"/><polygon points="437.28,747.83 439.52,747.83 439.52,757.48 437.28,757.48" fill="#006000"/><polygon points="432.91,735.54 434.63,735.54 436.25,744.15 434.53,744.15" fill="#006000"/><polygon points="443.89,735.54 442.17,735.54 440.55,744.15 442.27,744.15" fill="#006000"/><polygon points="436.25,748.35 434.53,748.35 432.91,756.96 434.63,756.96" fill="#006000"/><polygon points="440.55,748.35 442.27,748.35 443.89,756.96 442.17,756.96" fill="#006000"/><rect x="449.7" y="738.55" width="4" height="4" fill="#006300"/><rect x="449.7" y="749.67" width="4" height="4" fill="#006300"/><rect x="449.7" y="756.5" width="4" height="4" fill="#00ff00"/><polygon points="456.22,732 472.38,732 469.89,734.51 458.71,734.51" fill="#00ff00"/><polygon points="458.71,757.99 469.89,757.99 472.38,760.5 456.22,760.5" fill="#006000"/><polygon points="455.7,732.52 458.19,735.02 458.19,744.48 455.7,745.73" fill="#006000"/><polygon points="455.7,746.77 458.19,748.02 458.19,757.48 455.7,759.98" fill="#006000"/><polygon points="472.9,732.52 470.41,735.02 470.41,744.48 472.9,745.73" fill="#00ff00"/><polygon points="472.9,746.77 470.41,748.02 470.41,757.48 472.9,759.98" fill="#00ff00"/><polygon points="456.22,746.25 458.71,745.18 462.67,745.18 462.67,747.32 458.71,747.32" fill="#006000"/><polygon points="472.38,746.25 469.89,745.18 465.93,745.18 465.93,747.32 469.89,747.32" fill="#006000"/><polygon points="463.18,735.02 465.42,735.02 465.42,744.67 463.18,744.67" fill="#006000"/><polygon points="463.18,747.83 465.42,747.83 465.42,757.48 463.18,757.48" fill="#006000"/><polygon points="458.81,735.54 460.53,735.54 462.15,744.15 460.43,744.15" fill="#006000"/><polygon points="469.79,735.54 468.07,735.54 466.45,744.15 468.17,744.15" fill="#006000"/><polygon points="462.15,748.35 460.43,748.35 458.81,756.96 460.53,756.96" fill="#006000"/><polygon points="466.45,748.35 468.17,748.35 469.79,756.96 468.07,756.96" fill="#006000"/><polygon points="476.12,732 492.28,732 489.79,734.51 478.61,734.51" fill="#006000"/><polygon points="478.61,757.99 489.79,757.99 492.28,760.5 476.12,760.5" fill="#006000"/><polygon points="475.6,732.52 478.09,735.02 478.09,744.48 475.6,745.73" fill="#00ff00"/><polygon points="475.6,746.77 478.09,748.02 478.09,757.48 475.6,759.98" fill="#006000"/><polygon points="492.8,732.52 490.31,735.02 490.31,744.48 492.8,745.73" fill="#00ff00"/><polygon points="492.8,746.77 490.31,748.02 490.31,757.48 492.8,759.98" fill="#00ff00"/><polygon points="476.12,746.25 478.61,745.18 482.57,745.18 482.57,747.32 478.61,747.32" fill="#00ff00"/><polygon points="492.28,746.25 489.79,745.18 485.83,745.18 485.83,747.32 489.79,747.32" fill="#00ff00"/><polygon points="483.08,735.02 485.32,735.02 485.32,744.67 483.08,744.67" fill="#006000"/><polygon points="483.08,747.83 485.32,747.83 485.32,757.48 483.08,757.48" fill="#006000"/><polygon points="478.71,735.54 480.43,735.54 482.05,744.15 480.33,744.15" fill="#006000"/><polygon points="489.69,735.54 487.97,735.54 486.35,744.15 488.07,744.15" fill="#006000"/><polygon points="482.05,748.35 480.33,748.35 478.71,756.96 480.43,756.96" fill="#006000"/><polygon points="486.35,748.35 488.07,748.35 489.69,756.96 487.97,756.96" fill="#006000"/><text x="703.2" y="487.7" font-size="21.2" text-anchor="middle" font-weight="bold" fill="#000">Tank 103</text><rect x="634.5" y="691" width="15" height="1.4" fill="#000"/><text x="628.5" y="694.6" font-size="10" text-anchor="end" fill="#000">0</text><rect x="642.5" y="682" width="7" height="1.4" fill="#000"/><rect x="642.5" y="673" width="7" height="1.4" fill="#000"/><rect x="642.5" y="665" width="7" height="1.4" fill="#000"/><rect x="642.5" y="656" width="7" height="1.4" fill="#000"/><rect x="634.5" y="648" width="15" height="1.4" fill="#000"/><text x="628.5" y="651.6" font-size="10" text-anchor="end" fill="#000">25</text><rect x="642.5" y="639" width="7" height="1.4" fill="#000"/><rect x="642.5" y="630" width="7" height="1.4" fill="#000"/><rect x="642.5" y="622" width="7" height="1.4" fill="#000"/><rect x="642.5" y="613" width="7" height="1.4" fill="#000"/><rect x="634.5" y="605" width="15" height="1.4" fill="#000"/><text x="628.5" y="608.6" font-size="10" text-anchor="end" fill="#000">50</text><rect x="642.5" y="596" width="7" height="1.4" fill="#000"/><rect x="642.5" y="587" width="7" height="1.4" fill="#000"/><rect x="642.5" y="579" width="7" height="1.4" fill="#000"/><rect x="642.5" y="570" width="7" height="1.4" fill="#000"/><rect x="634.5" y="562" width="15" height="1.4" fill="#000"/><text x="628.5" y="565.6" font-size="10" text-anchor="end" fill="#000">75</text><rect x="642.5" y="553" width="7" height="1.4" fill="#000"/><rect x="642.5" y="544" width="7" height="1.4" fill="#000"/><rect x="642.5" y="536" width="7" height="1.4" fill="#000"/><rect x="642.5" y="527" width="7" height="1.4" fill="#000"/><rect x="634.5" y="519" width="15" height="1.4" fill="#000"/><text x="628.5" y="522.6" font-size="10" text-anchor="end" fill="#000">100</text><rect x="619.5" y="552.3" width="28" height="2.2" fill="#ff0000"/><rect x="619.5" y="655.5" width="28" height="2.2" fill="#00a800"/><text transform="translate(611.5,553.4) rotate(-90)" font-size="9.8" text-anchor="middle" fill="#444">High</text><text transform="translate(611.5,656.6) rotate(-90)" font-size="9.8" text-anchor="middle" fill="#444">Low</text><defs><linearGradient id="tg11" x1="0" x2="1" y1="0" y2="0"><stop offset="0" stop-color="#b2b2b2"/><stop offset="0.38" stop-color="#d6d6d6"/><stop offset="0.6" stop-color="#bdbdbd"/><stop offset="1" stop-color="#939393"/></linearGradient><linearGradient id="tb12" x1="0" x2="1" y1="0" y2="0"><stop offset="0" stop-color="#6a7dbd"/><stop offset="0.38" stop-color="#7b90d6"/><stop offset="0.62" stop-color="#7186c9"/><stop offset="1" stop-color="#56669c"/></linearGradient></defs><path d="M674.5,528.7 L674.5,695.5 A89,11 0 0 0 852.5,695.5 L852.5,528.7 Z" fill="url(#tg11)"/><path d="M674.5,612.1 L674.5,695.5 A89,11 0 0 0 852.5,695.5 L852.5,612.1 A89,11 0 0 0 674.5,612.1 Z" fill="url(#tb12)"/><ellipse cx="763.5" cy="612.1" rx="89" ry="11" fill="#b4cdfb"/><path d="M674.5,612.1 A89,11 0 0 0 852.5,612.1" fill="none" stroke="#222" stroke-width="1.1"/><path d="M674.5,612.1 A89,11 0 0 1 852.5,612.1" fill="none" stroke="#333" stroke-width="1.1" stroke-dasharray="6,3"/><path d="M674.5,695.5 A89,11 0 0 1 852.5,695.5" fill="none" stroke="#333" stroke-width="1.1" stroke-dasharray="6,3"/><path d="M674.5,528.7 L674.5,695.5 A89,11 0 0 0 852.5,695.5 L852.5,528.7" fill="none" stroke="#000" stroke-width="1.25"/><ellipse cx="763.5" cy="528.7" rx="89" ry="11" fill="#fff" stroke="#222" stroke-width="1.1"/><text x="581.5" y="753.7" font-size="16.2" text-anchor="start" font-weight="bold" fill="#000">Temperature:</text><rect x="721" y="728" width="133" height="35.5" fill="#424242"/><rect x="721" y="728" width="133" height="2" fill="#1c1c1c"/><rect x="721" y="728" width="2" height="35.5" fill="#1c1c1c"/><rect x="723" y="761.5" width="131" height="2" fill="#707070"/><rect x="852" y="730" width="2" height="33.5" fill="#707070"/><polygon points="766.42,732 782.58,732 780.09,734.51 768.91,734.51" fill="#006000"/><polygon points="768.91,757.99 780.09,757.99 782.58,760.5 766.42,760.5" fill="#006000"/><polygon points="765.9,732.52 768.39,735.02 768.39,744.48 765.9,745.73" fill="#00ff00"/><polygon points="765.9,746.77 768.39,748.02 768.39,757.48 765.9,759.98" fill="#006000"/><polygon points="783.1,732.52 780.61,735.02 780.61,744.48 783.1,745.73" fill="#00ff00"/><polygon points="783.1,746.77 780.61,748.02 780.61,757.48 783.1,759.98" fill="#00ff00"/><polygon points="766.42,746.25 768.91,745.18 772.87,745.18 772.87,747.32 768.91,747.32" fill="#00ff00"/><polygon points="782.58,746.25 780.09,745.18 776.13,745.18 776.13,747.32 780.09,747.32" fill="#00ff00"/><polygon points="773.38,735.02 775.62,735.02 775.62,744.67 773.38,744.67" fill="#006000"/><polygon points="773.38,747.83 775.62,747.83 775.62,757.48 773.38,757.48" fill="#006000"/><polygon points="769.01,735.54 770.73,735.54 772.35,744.15 770.63,744.15" fill="#006000"/><polygon points="779.99,735.54 778.27,735.54 776.65,744.15 778.37,744.15" fill="#006000"/><polygon points="772.35,748.35 770.63,748.35 769.01,756.96 770.73,756.96" fill="#006000"/><polygon points="776.65,748.35 778.37,748.35 779.99,756.96 778.27,756.96" fill="#006000"/><polygon points="786.32,732 802.48,732 799.99,734.51 788.81,734.51" fill="#00ff00"/><polygon points="788.81,757.99 799.99,757.99 802.48,760.5 786.32,760.5" fill="#00ff00"/><polygon points="785.8,732.52 788.29,735.02 788.29,744.48 785.8,745.73" fill="#006000"/><polygon points="785.8,746.77 788.29,748.02 788.29,757.48 785.8,759.98" fill="#006000"/><polygon points="803,732.52 800.51,735.02 800.51,744.48 803,745.73" fill="#00ff00"/><polygon points="803,746.77 800.51,748.02 800.51,757.48 803,759.98" fill="#00ff00"/><polygon points="786.32,746.25 788.81,745.18 792.77,745.18 792.77,747.32 788.81,747.32" fill="#006000"/><polygon points="802.48,746.25 799.99,745.18 796.03,745.18 796.03,747.32 799.99,747.32" fill="#00ff00"/><polygon points="793.28,735.02 795.52,735.02 795.52,744.67 793.28,744.67" fill="#006000"/><polygon points="793.28,747.83 795.52,747.83 795.52,757.48 793.28,757.48" fill="#006000"/><polygon points="788.91,735.54 790.63,735.54 792.25,744.15 790.53,744.15" fill="#006000"/><polygon points="799.89,735.54 798.17,735.54 796.55,744.15 798.27,744.15" fill="#006000"/><polygon points="792.25,748.35 790.53,748.35 788.91,756.96 790.63,756.96" fill="#006000"/><polygon points="796.55,748.35 798.27,748.35 799.89,756.96 798.17,756.96" fill="#006000"/><rect x="805.7" y="738.55" width="4" height="4" fill="#006300"/><rect x="805.7" y="749.67" width="4" height="4" fill="#006300"/><rect x="805.7" y="756.5" width="4" height="4" fill="#00ff00"/><polygon points="812.22,732 828.38,732 825.89,734.51 814.71,734.51" fill="#00ff00"/><polygon points="814.71,757.99 825.89,757.99 828.38,760.5 812.22,760.5" fill="#00ff00"/><polygon points="811.7,732.52 814.19,735.02 814.19,744.48 811.7,745.73" fill="#00ff00"/><polygon points="811.7,746.77 814.19,748.02 814.19,757.48 811.7,759.98" fill="#00ff00"/><polygon points="828.9,732.52 826.41,735.02 826.41,744.48 828.9,745.73" fill="#006000"/><polygon points="828.9,746.77 826.41,748.02 826.41,757.48 828.9,759.98" fill="#00ff00"/><polygon points="812.22,746.25 814.71,745.18 818.67,745.18 818.67,747.32 814.71,747.32" fill="#00ff00"/><polygon points="828.38,746.25 825.89,745.18 821.93,745.18 821.93,747.32 825.89,747.32" fill="#00ff00"/><polygon points="819.18,735.02 821.42,735.02 821.42,744.67 819.18,744.67" fill="#006000"/><polygon points="819.18,747.83 821.42,747.83 821.42,757.48 819.18,757.48" fill="#006000"/><polygon points="814.81,735.54 816.53,735.54 818.15,744.15 816.43,744.15" fill="#006000"/><polygon points="825.79,735.54 824.07,735.54 822.45,744.15 824.17,744.15" fill="#006000"/><polygon points="818.15,748.35 816.43,748.35 814.81,756.96 816.53,756.96" fill="#006000"/><polygon points="822.45,748.35 824.17,748.35 825.79,756.96 824.07,756.96" fill="#006000"/><polygon points="832.12,732 848.28,732 845.79,734.51 834.61,734.51" fill="#00ff00"/><polygon points="834.61,757.99 845.79,757.99 848.28,760.5 832.12,760.5" fill="#00ff00"/><polygon points="831.6,732.52 834.09,735.02 834.09,744.48 831.6,745.73" fill="#00ff00"/><polygon points="831.6,746.77 834.09,748.02 834.09,757.48 831.6,759.98" fill="#006000"/><polygon points="848.8,732.52 846.31,735.02 846.31,744.48 848.8,745.73" fill="#006000"/><polygon points="848.8,746.77 846.31,748.02 846.31,757.48 848.8,759.98" fill="#00ff00"/><polygon points="832.12,746.25 834.61,745.18 838.57,745.18 838.57,747.32 834.61,747.32" fill="#00ff00"/><polygon points="848.28,746.25 845.79,745.18 841.83,745.18 841.83,747.32 845.79,747.32" fill="#00ff00"/><polygon points="839.08,735.02 841.32,735.02 841.32,744.67 839.08,744.67" fill="#006000"/><polygon points="839.08,747.83 841.32,747.83 841.32,757.48 839.08,757.48" fill="#006000"/><polygon points="834.71,735.54 836.43,735.54 838.05,744.15 836.33,744.15" fill="#006000"/><polygon points="845.69,735.54 843.97,735.54 842.35,744.15 844.07,744.15" fill="#006000"/><polygon points="838.05,748.35 836.33,748.35 834.71,756.96 836.43,756.96" fill="#006000"/><polygon points="842.35,748.35 844.07,748.35 845.69,756.96 843.97,756.96" fill="#006000"/></g></svg><svg style="position:absolute;left:217px;top:219px;z-index:10" width="796" height="363" viewBox="0 0 796 363" font-family='"Liberation Sans", sans-serif'><defs><linearGradient id="tbg13" x1="0" y1="0" x2="0" y2="1"><stop offset="0" stop-color="#c9ccce"/><stop offset="1" stop-color="#a4a8ab"/></linearGradient></defs><rect x="0" y="0" width="796" height="363" fill="#a6aaad"/><rect x="0" y="0" width="1" height="363" fill="#c8cbcd"/><rect x="795" y="0" width="1" height="363" fill="#85898c"/><rect x="0" y="362" width="796" height="1" fill="#85898c"/><rect x="1" y="0" width="794" height="21" fill="url(#tbg13)"/><rect x="1" y="0" width="794" height="1" fill="#c8cbcd" opacity="0.6"/><rect x="4" y="21" width="788" height="1" fill="#888c8f"/><rect x="30" y="5.3" width="341" height="1.2" fill="#adb1b3"/><rect x="30" y="9.3" width="341" height="1.2" fill="#adb1b3"/><rect x="30" y="13.3" width="341" height="1.2" fill="#adb1b3"/><rect x="30" y="8.2" width="341" height="1" fill="#c2c5c7"/><rect x="30" y="12.2" width="341" height="1" fill="#c2c5c7"/><rect x="30" y="16.2" width="341" height="1" fill="#c2c5c7"/><rect x="424" y="5.3" width="324" height="1.2" fill="#adb1b3"/><rect x="424" y="9.3" width="324" height="1.2" fill="#adb1b3"/><rect x="424" y="13.3" width="324" height="1.2" fill="#adb1b3"/><rect x="424" y="8.2" width="324" height="1" fill="#c2c5c7"/><rect x="424" y="12.2" width="324" height="1" fill="#c2c5c7"/><rect x="424" y="16.2" width="324" height="1" fill="#c2c5c7"/><text x="398" y="16" font-size="12" text-anchor="middle" font-weight="bold" fill="#000">Popup</text><defs><linearGradient id="wg14" x1="0" y1="0" x2="1" y2="0"><stop offset="0" stop-color="#9a9c9e"/><stop offset="1" stop-color="#66696c"/></linearGradient></defs><rect x="7" y="3" width="15" height="15" fill="#55585b"/><rect x="8" y="4" width="13" height="3" fill="url(#wg14)"/><rect x="8.5" y="7.5" width="12" height="9.5" fill="#fff"/><defs><linearGradient id="mg15" x1="0" y1="0" x2="1" y2="1"><stop offset="0" stop-color="#3a3a3a"/><stop offset="1" stop-color="#9a9a9a"/></linearGradient></defs><rect x="754" y="3" width="14" height="15" fill="url(#mg15)"/><path d="M758,15 l6,-6 M760,8 h5 v5" stroke="#000" stroke-width="2" fill="none"/><path d="M757,14 l6,-6 M759,7 h5 v5" stroke="#fff" stroke-width="2" fill="none"/><rect x="772" y="3" width="14" height="15" fill="#c85a45"/><path d="M775.6,7.2 l8,8 M783.6,7.2 l-8,8" stroke="#000" stroke-width="2.2" fill="none"/><path d="M775,6.5 l8,8 M783,6.5 l-8,8" stroke="#fff" stroke-width="2.2" fill="none"/><rect x="5" y="22" width="786" height="336" fill="#edece8"/><rect x="4" y="22" width="1" height="336" fill="#85898c"/><rect x="5" y="358" width="786" height="1" fill="#c8cbcd" opacity="0.5"/><rect x="791" y="22" width="1" height="336" fill="#c8cbcd" opacity="0.5"/><rect x="1" y="354" width="2" height="2" fill="#85898c"/><rect x="2" y="355" width="2" height="2" fill="#c8cbcd" opacity="0.8"/><rect x="1" y="359" width="2" height="2" fill="#85898c"/><rect x="2" y="360" width="2" height="2" fill="#c8cbcd" opacity="0.8"/><rect x="6" y="359" width="2" height="2" fill="#85898c"/><rect x="7" y="360" width="2" height="2" fill="#c8cbcd" opacity="0.8"/><rect x="791" y="354" width="2" height="2" fill="#85898c"/><rect x="792" y="355" width="2" height="2" fill="#c8cbcd" opacity="0.8"/><rect x="791" y="359" width="2" height="2" fill="#85898c"/><rect x="792" y="360" width="2" height="2" fill="#c8cbcd" opacity="0.8"/><rect x="786" y="359" width="2" height="2" fill="#85898c"/><rect x="787" y="360" width="2" height="2" fill="#c8cbcd" opacity="0.8"/><text x="128" y="46" font-size="17" text-anchor="middle" font-weight="bold" fill="#000">Tank 100</text><rect x="73" y="224" width="15" height="1.4" fill="#000"/><text x="67" y="227.6" font-size="10" text-anchor="end" fill="#000">0</text><rect x="81" y="216" width="7" height="1.4" fill="#000"/><rect x="81" y="209" width="7" height="1.4" fill="#000"/><rect x="81" y="201" width="7" height="1.4" fill="#000"/><rect x="81" y="194" width="7" height="1.4" fill="#000"/><rect x="73" y="186" width="15" height="1.4" fill="#000"/><text x="67" y="190.1" font-size="10" text-anchor="end" fill="#000">25</text><rect x="81" y="179" width="7" height="1.4" fill="#000"/><rect x="81" y="171" width="7" height="1.4" fill="#000"/><rect x="81" y="164" width="7" height="1.4" fill="#000"/><rect x="81" y="156" width="7" height="1.4" fill="#000"/><rect x="73" y="149" width="15" height="1.4" fill="#000"/><text x="67" y="152.6" font-size="10" text-anchor="end" fill="#000">50</text><rect x="81" y="141" width="7" height="1.4" fill="#000"/><rect x="81" y="134" width="7" height="1.4" fill="#000"/><rect x="81" y="126" width="7" height="1.4" fill="#000"/><rect x="81" y="119" width="7" height="1.4" fill="#000"/><rect x="73" y="111" width="15" height="1.4" fill="#000"/><text x="67" y="115.1" font-size="10" text-anchor="end" fill="#000">75</text><rect x="81" y="104" width="7" height="1.4" fill="#000"/><rect x="81" y="96" width="7" height="1.4" fill="#000"/><rect x="81" y="89" width="7" height="1.4" fill="#000"/><rect x="81" y="81" width="7" height="1.4" fill="#000"/><rect x="73" y="74" width="15" height="1.4" fill="#000"/><text x="67" y="77.6" font-size="10" text-anchor="end" fill="#000">100</text><rect x="58" y="102.9" width="28" height="2.2" fill="#ff0000"/><rect x="58" y="192.9" width="28" height="2.2" fill="#00a800"/><text transform="translate(49.5,104) rotate(-90)" font-size="9.8" text-anchor="middle" fill="#444">High</text><text transform="translate(49.5,194) rotate(-90)" font-size="9.8" text-anchor="middle" fill="#444">Low</text><defs><linearGradient id="tg16" x1="0" x2="1" y1="0" y2="0"><stop offset="0" stop-color="#b2b2b2"/><stop offset="0.38" stop-color="#d6d6d6"/><stop offset="0.6" stop-color="#bdbdbd"/><stop offset="1" stop-color="#939393"/></linearGradient><linearGradient id="tb17" x1="0" x2="1" y1="0" y2="0"><stop offset="0" stop-color="#6a7dbd"/><stop offset="0.38" stop-color="#7b90d6"/><stop offset="0.62" stop-color="#7186c9"/><stop offset="1" stop-color="#56669c"/></linearGradient></defs><path d="M106.5,81.2 L106.5,230.5 A63.5,8.3 0 0 0 233.5,230.5 L233.5,81.2 Z" fill="url(#tg16)"/><path d="M106.5,182.72 L106.5,230.5 A63.5,8.3 0 0 0 233.5,230.5 L233.5,182.72 A63.5,8.3 0 0 0 106.5,182.72 Z" fill="url(#tb17)"/><ellipse cx="170" cy="182.72" rx="63.5" ry="8.3" fill="#b4cdfb"/><path d="M106.5,182.72 A63.5,8.3 0 0 0 233.5,182.72" fill="none" stroke="#222" stroke-width="1.1"/><path d="M106.5,182.72 A63.5,8.3 0 0 1 233.5,182.72" fill="none" stroke="#333" stroke-width="1.1" stroke-dasharray="6,3"/><path d="M106.5,230.5 A63.5,8.3 0 0 1 233.5,230.5" fill="none" stroke="#333" stroke-width="1.1" stroke-dasharray="6,3"/><path d="M106.5,81.2 L106.5,230.5 A63.5,8.3 0 0 0 233.5,230.5 L233.5,81.2" fill="none" stroke="#000" stroke-width="1.25"/><ellipse cx="170" cy="81.2" rx="63.5" ry="8.3" fill="#fff" stroke="#222" stroke-width="1.1"/><text x="168.4" y="161.85" font-size="11.8" text-anchor="middle" fill="#000">32%</text><text x="39.5" y="278.3" font-size="13.6" text-anchor="start" font-weight="bold" fill="#000">Temperature:</text><rect x="138" y="256" width="96" height="32" fill="#424242"/><rect x="138" y="256" width="96" height="2" fill="#1c1c1c"/><rect x="138" y="256" width="2" height="32" fill="#1c1c1c"/><rect x="140" y="286" width="94" height="2" fill="#707070"/><rect x="232" y="258" width="2" height="30" fill="#707070"/><polygon points="176.45,260 190.55,260 188.38,262.11 178.62,262.11" fill="#00ff00"/><polygon points="178.62,281.89 188.38,281.89 190.55,284 176.45,284" fill="#00ff00"/><polygon points="176,260.45 178.18,262.56 178.18,270.49 176,271.55" fill="#00ff00"/><polygon points="176,272.45 178.18,273.51 178.18,281.44 176,283.55" fill="#006000"/><polygon points="191,260.45 188.82,262.56 188.82,270.49 191,271.55" fill="#00ff00"/><polygon points="191,272.45 188.82,273.51 188.82,281.44 191,283.55" fill="#00ff00"/><polygon points="176.45,272 178.62,271.1 182.08,271.1 182.08,272.9 178.62,272.9" fill="#00ff00"/><polygon points="190.55,272 188.38,271.1 184.92,271.1 184.92,272.9 188.38,272.9" fill="#00ff00"/><polygon points="182.53,262.56 184.47,262.56 184.47,270.65 182.53,270.65" fill="#006000"/><polygon points="182.53,273.35 184.47,273.35 184.47,281.44 182.53,281.44" fill="#006000"/><polygon points="178.72,263.01 180.22,263.01 181.62,270.2 180.12,270.2" fill="#006000"/><polygon points="188.28,263.01 186.78,263.01 185.38,270.2 186.88,270.2" fill="#006000"/><polygon points="181.62,273.8 180.12,273.8 178.72,280.99 180.22,280.99" fill="#006000"/><polygon points="185.38,273.8 186.88,273.8 188.28,280.99 186.78,280.99" fill="#006000"/><rect x="193" y="265.52" width="3" height="3" fill="#006300"/><rect x="193" y="274.88" width="3" height="3" fill="#006300"/><rect x="193" y="281" width="3" height="3" fill="#00ff00"/><polygon points="198.45,260 212.55,260 210.38,262.11 200.62,262.11" fill="#00ff00"/><polygon points="200.62,281.89 210.38,281.89 212.55,284 198.45,284" fill="#006000"/><polygon points="198,260.45 200.18,262.56 200.18,270.49 198,271.55" fill="#006000"/><polygon points="198,272.45 200.18,273.51 200.18,281.44 198,283.55" fill="#006000"/><polygon points="213,260.45 210.82,262.56 210.82,270.49 213,271.55" fill="#00ff00"/><polygon points="213,272.45 210.82,273.51 210.82,281.44 213,283.55" fill="#00ff00"/><polygon points="198.45,272 200.62,271.1 204.08,271.1 204.08,272.9 200.62,272.9" fill="#006000"/><polygon points="212.55,272 210.38,271.1 206.92,271.1 206.92,272.9 210.38,272.9" fill="#006000"/><polygon points="204.53,262.56 206.47,262.56 206.47,270.65 204.53,270.65" fill="#006000"/><polygon points="204.53,273.35 206.47,273.35 206.47,281.44 204.53,281.44" fill="#006000"/><polygon points="200.72,263.01 202.22,263.01 203.62,270.2 202.12,270.2" fill="#006000"/><polygon points="210.28,263.01 208.78,263.01 207.38,270.2 208.88,270.2" fill="#006000"/><polygon points="203.62,273.8 202.12,273.8 200.72,280.99 202.22,280.99" fill="#006000"/><polygon points="207.38,273.8 208.88,273.8 210.28,280.99 208.78,280.99" fill="#006000"/><polygon points="215.45,260 229.55,260 227.38,262.11 217.62,262.11" fill="#006000"/><polygon points="217.62,281.89 227.38,281.89 229.55,284 215.45,284" fill="#006000"/><polygon points="215,260.45 217.18,262.56 217.18,270.49 215,271.55" fill="#00ff00"/><polygon points="215,272.45 217.18,273.51 217.18,281.44 215,283.55" fill="#006000"/><polygon points="230,260.45 227.82,262.56 227.82,270.49 230,271.55" fill="#00ff00"/><polygon points="230,272.45 227.82,273.51 227.82,281.44 230,283.55" fill="#00ff00"/><polygon points="215.45,272 217.62,271.1 221.08,271.1 221.08,272.9 217.62,272.9" fill="#00ff00"/><polygon points="229.55,272 227.38,271.1 223.92,271.1 223.92,272.9 227.38,272.9" fill="#00ff00"/><polygon points="221.53,262.56 223.47,262.56 223.47,270.65 221.53,270.65" fill="#006000"/><polygon points="221.53,273.35 223.47,273.35 223.47,281.44 221.53,281.44" fill="#006000"/><polygon points="217.72,263.01 219.22,263.01 220.62,270.2 219.12,270.2" fill="#006000"/><polygon points="227.28,263.01 225.78,263.01 224.38,270.2 225.88,270.2" fill="#006000"/><polygon points="220.62,273.8 219.12,273.8 217.72,280.99 219.22,280.99" fill="#006000"/><polygon points="224.38,273.8 225.88,273.8 227.28,280.99 225.78,280.99" fill="#006000"/><rect x="289.5" y="37.5" width="131" height="62" rx="3" fill="none" stroke="#aaa79f" stroke-width="1"/><rect x="293" y="33" width="38" height="8" fill="#edece8"/><text x="295.5" y="43" font-size="12.5" text-anchor="start" font-weight="bold" fill="#000">Pens</text><rect x="297.5" y="54.5" width="11" height="11" fill="#ff4d4d" stroke="#333" stroke-width="1"/><rect x="318.5" y="54.5" width="11" height="11" fill="#e6e6e6" stroke="#666" stroke-width="1"/><path d="M320.5,60 l2.5,3 l5,-7" stroke="#6f7880" stroke-width="2" fill="none"/><text x="334" y="64.7" font-size="12.1" text-anchor="start" font-weight="normal" fill="#000">level_PV</text><path d="M395,55 l10,10 M405,55 l-10,10" stroke="#555" stroke-width="3.2" fill="none"/><path d="M395,55 l10,10 M405,55 l-10,10" stroke="#fff" stroke-width="1.9" fill="none"/><rect x="297.5" y="78.5" width="11" height="11" fill="#5555ff" stroke="#333" stroke-width="1"/><rect x="318.5" y="78.5" width="11" height="11" fill="#e6e6e6" stroke="#666" stroke-width="1"/><path d="M320.5,84 l2.5,3 l5,-7" stroke="#6f7880" stroke-width="2" fill="none"/><text x="334" y="88.7" font-size="12.1" text-anchor="start" font-weight="normal" fill="#000">temp_PV</text><path d="M398,79 l10,10 M408,79 l-10,10" stroke="#555" stroke-width="3.2" fill="none"/><path d="M398,79 l10,10 M408,79 l-10,10" stroke="#fff" stroke-width="1.9" fill="none"/><defs><clipPath id="cc18"><rect x="483.5" y="36.5" width="261" height="214"/></clipPath></defs><rect x="483.5" y="36.5" width="261" height="214" fill="#fff" stroke="#a8a8a8" stroke-width="1"/><line x1="483.5" y1="54.5" x2="744.5" y2="54.5" stroke="#d4d4d4" stroke-width="1" stroke-dasharray="3,3"/><line x1="480.5" y1="54.5" x2="483.5" y2="54.5" stroke="#666" stroke-width="1"/><text x="467.5" y="59.1" font-size="10.5" text-anchor="end" font-weight="normal" fill="#000">65</text><line x1="483.5" y1="82.5" x2="744.5" y2="82.5" stroke="#d4d4d4" stroke-width="1" stroke-dasharray="3,3"/><line x1="480.5" y1="82.5" x2="483.5" y2="82.5" stroke="#666" stroke-width="1"/><text x="467.5" y="87.1" font-size="10.5" text-anchor="end" font-weight="normal" fill="#000">60</text><line x1="483.5" y1="111.5" x2="744.5" y2="111.5" stroke="#d4d4d4" stroke-width="1" stroke-dasharray="3,3"/><line x1="480.5" y1="111.5" x2="483.5" y2="111.5" stroke="#666" stroke-width="1"/><text x="467.5" y="116.1" font-size="10.5" text-anchor="end" font-weight="normal" fill="#000">55</text><line x1="483.5" y1="139.5" x2="744.5" y2="139.5" stroke="#d4d4d4" stroke-width="1" stroke-dasharray="3,3"/><line x1="480.5" y1="139.5" x2="483.5" y2="139.5" stroke="#666" stroke-width="1"/><text x="467.5" y="144.1" font-size="10.5" text-anchor="end" font-weight="normal" fill="#000">50</text><line x1="483.5" y1="168.5" x2="744.5" y2="168.5" stroke="#d4d4d4" stroke-width="1" stroke-dasharray="3,3"/><line x1="480.5" y1="168.5" x2="483.5" y2="168.5" stroke="#666" stroke-width="1"/><text x="467.5" y="173.1" font-size="10.5" text-anchor="end" font-weight="normal" fill="#000">45</text><line x1="483.5" y1="196.5" x2="744.5" y2="196.5" stroke="#d4d4d4" stroke-width="1" stroke-dasharray="3,3"/><line x1="480.5" y1="196.5" x2="483.5" y2="196.5" stroke="#666" stroke-width="1"/><text x="467.5" y="201.1" font-size="10.5" text-anchor="end" font-weight="normal" fill="#000">40</text><line x1="483.5" y1="225.5" x2="744.5" y2="225.5" stroke="#d4d4d4" stroke-width="1" stroke-dasharray="3,3"/><line x1="480.5" y1="225.5" x2="483.5" y2="225.5" stroke="#666" stroke-width="1"/><text x="467.5" y="230.1" font-size="10.5" text-anchor="end" font-weight="normal" fill="#000">35</text><line x1="480.5" y1="253.5" x2="483.5" y2="253.5" stroke="#666" stroke-width="1"/><text x="467.5" y="258.1" font-size="10.5" text-anchor="end" font-weight="normal" fill="#000">30</text><line x1="589.6" y1="36.5" x2="589.6" y2="250.5" stroke="#d4d4d4" stroke-width="1" stroke-dasharray="3,3"/><line x1="589.6" y1="250.5" x2="589.6" y2="253.5" stroke="#333" stroke-width="1"/><line x1="693.6" y1="36.5" x2="693.6" y2="250.5" stroke="#d4d4d4" stroke-width="1" stroke-dasharray="3,3"/><line x1="693.6" y1="250.5" x2="693.6" y2="253.5" stroke="#333" stroke-width="1"/><line x1="483.5" y1="36.5" x2="483.5" y2="251" stroke="#808080" stroke-width="1"/><line x1="483.5" y1="250.5" x2="745" y2="250.5" stroke="#808080" stroke-width="1"/><polyline clip-path="url(#cc18)" points="475,71 583,61 742,56" fill="none" stroke="#4b4bff" stroke-width="1.1"/><text x="589.6" y="264" font-size="10.5" text-anchor="middle" font-weight="normal" fill="#000">10:54 AM</text><text x="693.6" y="264" font-size="10.5" text-anchor="middle" font-weight="normal" fill="#000">10:56 AM</text><text x="612" y="281.6" font-size="12" text-anchor="middle" font-weight="normal" fill="#333" letter-spacing="0">[ Sep 7, 2016 ]</text><text transform="translate(448,143) rotate(-90)" font-size="12" text-anchor="middle" fill="#000">Value</text><rect x="755.6" y="37.6" width="15" height="15" fill="#fff" stroke="#222" stroke-width="1.2"/><path d="M763,38.6 l-2.8,2.8 h5.6 z M763,51.4 l-2.8,-2.8 h5.6 z M756.6,45 l2.8,-2.8 v5.6 z M769.4,45 l-2.8,-2.8 v5.6 z" fill="#333"/><rect x="755.8" y="67.3" width="14" height="6.3" fill="#d2d2d2" stroke="#333" stroke-width="1.1"/><path d="M758.8,62.3 h6 l2.4,2.4 v6.2 h-8.4 z" fill="#fff" stroke="#444" stroke-width="1"/><path d="M764.8,62.3 l2.4,2.4 h-2.4 z" fill="#777"/><path d="M760.5,66.5 h4.5 M760.5,68.5 h4.5" stroke="#555" stroke-width="0.9"/><rect x="757" y="73.6" width="10.8" height="3.2" fill="#8a8a8a" stroke="#333" stroke-width="1"/><rect x="755" y="87" width="16" height="16" fill="#7a7a7a" stroke="#333" stroke-width="0.8"/><rect x="758" y="88" width="10" height="6" fill="#fff"/><rect x="760" y="98" width="6" height="4" fill="#ddd"/><rect x="762.5" y="98" width="1" height="4" fill="#7a7a7a"/><rect x="323.5" y="295.5" width="62" height="24" rx="3" fill="#edece8" stroke="#958e80" stroke-width="1"/><text x="354.5" y="311.5" font-size="12" text-anchor="middle" font-weight="normal" fill="#8e887a">Apply</text><rect x="339.8" y="313" width="7" height="1" fill="#8e887a"/><text x="480.5" y="314" font-size="12.5" text-anchor="start" font-weight="normal" fill="#000">Last:</text><rect x="517.5" y="298.5" width="55" height="21" rx="2" fill="#fff" stroke="#6d695f" stroke-width="1.2"/><text x="552.3" y="314" font-size="12.5" text-anchor="end" font-weight="normal" fill="#000">5</text><rect x="555.5" y="300.5" width="15" height="8" rx="1.5" fill="#f2f1ee" stroke="#6d695f" stroke-width="1"/><rect x="555.5" y="309.5" width="15" height="8" rx="1.5" fill="#edece8" stroke="#6d695f" stroke-width="1"/><path d="M559.5,306 l3.5,-3.5 l3.5,3.5 z M559.5,312 l3.5,3.5 l3.5,-3.5 z" fill="#555"/><rect x="580.5" y="298.5" width="117" height="21" rx="2" fill="#edece8" stroke="#6d695f" stroke-width="1.2"/><text x="583" y="314" font-size="12.5" text-anchor="start" font-weight="normal" fill="#000">Minutes</text><rect x="678.5" y="300.5" width="17" height="17" rx="1.5" fill="#f6f5f2" stroke="#6d695f" stroke-width="1.2"/><path d="M682.8,307 h8.5 l-4.25,4.25 z" fill="#555"/><defs><linearGradient id="pz19" x1="0" y1="0" x2="0" y2="1"><stop offset="0" stop-color="#8a9aa8"/><stop offset="0.45" stop-color="#1e5a9a"/><stop offset="1" stop-color="#5ab0f5"/></linearGradient></defs><rect x="707" y="301" width="6" height="15.6" rx="3" fill="url(#pz19)" stroke="#0c2c55" stroke-width="1"/><rect x="715" y="301" width="6" height="15.6" rx="3" fill="url(#pz19)" stroke="#0c2c55" stroke-width="1"/></svg><svg style="position:absolute;left:393px;top:258px;z-index:11" width="796" height="363" viewBox="0 0 796 363" font-family='"Liberation Sans", sans-serif'><defs><linearGradient id="tbg20" x1="0" y1="0" x2="0" y2="1"><stop offset="0" stop-color="#c9ccce"/><stop offset="1" stop-color="#a4a8ab"/></linearGradient></defs><rect x="0" y="0" width="796" height="363" fill="#a6aaad"/><rect x="0" y="0" width="1" height="363" fill="#c8cbcd"/><rect x="795" y="0" width="1" height="363" fill="#85898c"/><rect x="0" y="362" width="796" height="1" fill="#85898c"/><rect x="1" y="0" width="794" height="21" fill="url(#tbg20)"/><rect x="1" y="0" width="794" height="1" fill="#c8cbcd" opacity="0.6"/><rect x="4" y="21" width="788" height="1" fill="#888c8f"/><rect x="30" y="5.3" width="341" height="1.2" fill="#adb1b3"/><rect x="30" y="9.3" width="341" height="1.2" fill="#adb1b3"/><rect x="30" y="13.3" width="341" height="1.2" fill="#adb1b3"/><rect x="30" y="8.2" width="341" height="1" fill="#c2c5c7"/><rect x="30" y="12.2" width="341" height="1" fill="#c2c5c7"/><rect x="30" y="16.2" width="341" height="1" fill="#c2c5c7"/><rect x="424" y="5.3" width="324" height="1.2" fill="#adb1b3"/><rect x="424" y="9.3" width="324" height="1.2" fill="#adb1b3"/><rect x="424" y="13.3" width="324" height="1.2" fill="#adb1b3"/><rect x="424" y="8.2" width="324" height="1" fill="#c2c5c7"/><rect x="424" y="12.2" width="324" height="1" fill="#c2c5c7"/><rect x="424" y="16.2" width="324" height="1" fill="#c2c5c7"/><text x="398" y="16" font-size="12" text-anchor="middle" font-weight="bold" fill="#000">Popup</text><defs><linearGradient id="wg21" x1="0" y1="0" x2="1" y2="0"><stop offset="0" stop-color="#9a9c9e"/><stop offset="1" stop-color="#66696c"/></linearGradient></defs><rect x="7" y="3" width="15" height="15" fill="#55585b"/><rect x="8" y="4" width="13" height="3" fill="url(#wg21)"/><rect x="8.5" y="7.5" width="12" height="9.5" fill="#fff"/><defs><linearGradient id="mg22" x1="0" y1="0" x2="1" y2="1"><stop offset="0" stop-color="#3a3a3a"/><stop offset="1" stop-color="#9a9a9a"/></linearGradient></defs><rect x="754" y="3" width="14" height="15" fill="url(#mg22)"/><path d="M758,15 l6,-6 M760,8 h5 v5" stroke="#000" stroke-width="2" fill="none"/><path d="M757,14 l6,-6 M759,7 h5 v5" stroke="#fff" stroke-width="2" fill="none"/><rect x="772" y="3" width="14" height="15" fill="#c85a45"/><path d="M775.6,7.2 l8,8 M783.6,7.2 l-8,8" stroke="#000" stroke-width="2.2" fill="none"/><path d="M775,6.5 l8,8 M783,6.5 l-8,8" stroke="#fff" stroke-width="2.2" fill="none"/><rect x="5" y="22" width="786" height="336" fill="#edece8"/><rect x="4" y="22" width="1" height="336" fill="#85898c"/><rect x="5" y="358" width="786" height="1" fill="#c8cbcd" opacity="0.5"/><rect x="791" y="22" width="1" height="336" fill="#c8cbcd" opacity="0.5"/><rect x="1" y="354" width="2" height="2" fill="#85898c"/><rect x="2" y="355" width="2" height="2" fill="#c8cbcd" opacity="0.8"/><rect x="1" y="359" width="2" height="2" fill="#85898c"/><rect x="2" y="360" width="2" height="2" fill="#c8cbcd" opacity="0.8"/><rect x="6" y="359" width="2" height="2" fill="#85898c"/><rect x="7" y="360" width="2" height="2" fill="#c8cbcd" opacity="0.8"/><rect x="791" y="354" width="2" height="2" fill="#85898c"/><rect x="792" y="355" width="2" height="2" fill="#c8cbcd" opacity="0.8"/><rect x="791" y="359" width="2" height="2" fill="#85898c"/><rect x="792" y="360" width="2" height="2" fill="#c8cbcd" opacity="0.8"/><rect x="786" y="359" width="2" height="2" fill="#85898c"/><rect x="787" y="360" width="2" height="2" fill="#c8cbcd" opacity="0.8"/><text x="128" y="46" font-size="17" text-anchor="middle" font-weight="bold" fill="#000">Tank 101</text><rect x="73" y="224" width="15" height="1.4" fill="#000"/><text x="67" y="227.6" font-size="10" text-anchor="end" fill="#000">0</text><rect x="81" y="216" width="7" height="1.4" fill="#000"/><rect x="81" y="209" width="7" height="1.4" fill="#000"/><rect x="81" y="201" width="7" height="1.4" fill="#000"/><rect x="81" y="194" width="7" height="1.4" fill="#000"/><rect x="73" y="186" width="15" height="1.4" fill="#000"/><text x="67" y="190.1" font-size="10" text-anchor="end" fill="#000">25</text><rect x="81" y="179" width="7" height="1.4" fill="#000"/><rect x="81" y="171" width="7" height="1.4" fill="#000"/><rect x="81" y="164" width="7" height="1.4" fill="#000"/><rect x="81" y="156" width="7" height="1.4" fill="#000"/><rect x="73" y="149" width="15" height="1.4" fill="#000"/><text x="67" y="152.6" font-size="10" text-anchor="end" fill="#000">50</text><rect x="81" y="141" width="7" height="1.4" fill="#000"/><rect x="81" y="134" width="7" height="1.4" fill="#000"/><rect x="81" y="126" width="7" height="1.4" fill="#000"/><rect x="81" y="119" width="7" height="1.4" fill="#000"/><rect x="73" y="111" width="15" height="1.4" fill="#000"/><text x="67" y="115.1" font-size="10" text-anchor="end" fill="#000">75</text><rect x="81" y="104" width="7" height="1.4" fill="#000"/><rect x="81" y="96" width="7" height="1.4" fill="#000"/><rect x="81" y="89" width="7" height="1.4" fill="#000"/><rect x="81" y="81" width="7" height="1.4" fill="#000"/><rect x="73" y="74" width="15" height="1.4" fill="#000"/><text x="67" y="77.6" font-size="10" text-anchor="end" fill="#000">100</text><rect x="58" y="102.9" width="28" height="2.2" fill="#ff0000"/><rect x="58" y="192.9" width="28" height="2.2" fill="#00a800"/><text transform="translate(49.5,104) rotate(-90)" font-size="9.8" text-anchor="middle" fill="#444">High</text><text transform="translate(49.5,194) rotate(-90)" font-size="9.8" text-anchor="middle" fill="#444">Low</text><defs><linearGradient id="tg23" x1="0" x2="1" y1="0" y2="0"><stop offset="0" stop-color="#b2b2b2"/><stop offset="0.38" stop-color="#d6d6d6"/><stop offset="0.6" stop-color="#bdbdbd"/><stop offset="1" stop-color="#939393"/></linearGradient><linearGradient id="tb24" x1="0" x2="1" y1="0" y2="0"><stop offset="0" stop-color="#6a7dbd"/><stop offset="0.38" stop-color="#7b90d6"/><stop offset="0.62" stop-color="#7186c9"/><stop offset="1" stop-color="#56669c"/></linearGradient></defs><path d="M106.5,81.2 L106.5,230.5 A63.5,8.3 0 0 0 233.5,230.5 L233.5,81.2 Z" fill="url(#tg23)"/><path d="M106.5,186.31 L106.5,230.5 A63.5,8.3 0 0 0 233.5,230.5 L233.5,186.31 A63.5,8.3 0 0 0 106.5,186.31 Z" fill="url(#tb24)"/><ellipse cx="170" cy="186.31" rx="63.5" ry="8.3" fill="#b4cdfb"/><path d="M106.5,186.31 A63.5,8.3 0 0 0 233.5,186.31" fill="none" stroke="#222" stroke-width="1.1"/><path d="M106.5,186.31 A63.5,8.3 0 0 1 233.5,186.31" fill="none" stroke="#333" stroke-width="1.1" stroke-dasharray="6,3"/><path d="M106.5,230.5 A63.5,8.3 0 0 1 233.5,230.5" fill="none" stroke="#333" stroke-width="1.1" stroke-dasharray="6,3"/><path d="M106.5,81.2 L106.5,230.5 A63.5,8.3 0 0 0 233.5,230.5 L233.5,81.2" fill="none" stroke="#000" stroke-width="1.25"/><ellipse cx="170" cy="81.2" rx="63.5" ry="8.3" fill="#fff" stroke="#222" stroke-width="1.1"/><text x="168.4" y="161.85" font-size="11.8" text-anchor="middle" fill="#000">30%</text><text x="39.5" y="278.3" font-size="13.6" text-anchor="start" font-weight="bold" fill="#000">Temperature:</text><rect x="138" y="256" width="96" height="32" fill="#424242"/><rect x="138" y="256" width="96" height="2" fill="#1c1c1c"/><rect x="138" y="256" width="2" height="32" fill="#1c1c1c"/><rect x="140" y="286" width="94" height="2" fill="#707070"/><rect x="232" y="258" width="2" height="30" fill="#707070"/><polygon points="159.45,260 173.55,260 171.38,262.11 161.62,262.11" fill="#00ff00"/><polygon points="161.62,281.89 171.38,281.89 173.55,284 159.45,284" fill="#00ff00"/><polygon points="159,260.45 161.18,262.56 161.18,270.49 159,271.55" fill="#00ff00"/><polygon points="159,272.45 161.18,273.51 161.18,281.44 159,283.55" fill="#006000"/><polygon points="174,260.45 171.82,262.56 171.82,270.49 174,271.55" fill="#006000"/><polygon points="174,272.45 171.82,273.51 171.82,281.44 174,283.55" fill="#00ff00"/><polygon points="159.45,272 161.62,271.1 165.08,271.1 165.08,272.9 161.62,272.9" fill="#00ff00"/><polygon points="173.55,272 171.38,271.1 167.92,271.1 167.92,272.9 171.38,272.9" fill="#00ff00"/><polygon points="165.53,262.56 167.47,262.56 167.47,270.65 165.53,270.65" fill="#006000"/><polygon points="165.53,273.35 167.47,273.35 167.47,281.44 165.53,281.44" fill="#006000"/><polygon points="161.72,263.01 163.22,263.01 164.62,270.2 163.12,270.2" fill="#006000"/><polygon points="171.28,263.01 169.78,263.01 168.38,270.2 169.88,270.2" fill="#006000"/><polygon points="164.62,273.8 163.12,273.8 161.72,280.99 163.22,280.99" fill="#006000"/><polygon points="168.38,273.8 169.88,273.8 171.28,280.99 169.78,280.99" fill="#006000"/><polygon points="176.45,260 190.55,260 188.38,262.11 178.62,262.11" fill="#00ff00"/><polygon points="178.62,281.89 188.38,281.89 190.55,284 176.45,284" fill="#00ff00"/><polygon points="176,260.45 178.18,262.56 178.18,270.49 176,271.55" fill="#00ff00"/><polygon points="176,272.45 178.18,273.51 178.18,281.44 176,283.55" fill="#006000"/><polygon points="191,260.45 188.82,262.56 188.82,270.49 191,271.55" fill="#006000"/><polygon points="191,272.45 188.82,273.51 188.82,281.44 191,283.55" fill="#00ff00"/><polygon points="176.45,272 178.62,271.1 182.08,271.1 182.08,272.9 178.62,272.9" fill="#00ff00"/><polygon points="190.55,272 188.38,271.1 184.92,271.1 184.92,272.9 188.38,272.9" fill="#00ff00"/><polygon points="182.53,262.56 184.47,262.56 184.47,270.65 182.53,270.65" fill="#006000"/><polygon points="182.53,273.35 184.47,273.35 184.47,281.44 182.53,281.44" fill="#006000"/><polygon points="178.72,263.01 180.22,263.01 181.62,270.2 180.12,270.2" fill="#006000"/><polygon points="188.28,263.01 186.78,263.01 185.38,270.2 186.88,270.2" fill="#006000"/><polygon points="181.62,273.8 180.12,273.8 178.72,280.99 180.22,280.99" fill="#006000"/><polygon points="185.38,273.8 186.88,273.8 188.28,280.99 186.78,280.99" fill="#006000"/><rect x="193" y="265.52" width="3" height="3" fill="#006300"/><rect x="193" y="274.88" width="3" height="3" fill="#006300"/><rect x="193" y="281" width="3" height="3" fill="#00ff00"/><polygon points="198.45,260 212.55,260 210.38,262.11 200.62,262.11" fill="#00ff00"/><polygon points="200.62,281.89 210.38,281.89 212.55,284 198.45,284" fill="#006000"/><polygon points="198,260.45 200.18,262.56 200.18,270.49 198,271.55" fill="#006000"/><polygon points="198,272.45 200.18,273.51 200.18,281.44 198,283.55" fill="#006000"/><polygon points="213,260.45 210.82,262.56 210.82,270.49 213,271.55" fill="#00ff00"/><polygon points="213,272.45 210.82,273.51 210.82,281.44 213,283.55" fill="#00ff00"/><polygon points="198.45,272 200.62,271.1 204.08,271.1 204.08,272.9 200.62,272.9" fill="#006000"/><polygon points="212.55,272 210.38,271.1 206.92,271.1 206.92,272.9 210.38,272.9" fill="#006000"/><polygon points="204.53,262.56 206.47,262.56 206.47,270.65 204.53,270.65" fill="#006000"/><polygon points="204.53,273.35 206.47,273.35 206.47,281.44 204.53,281.44" fill="#006000"/><polygon points="200.72,263.01 202.22,263.01 203.62,270.2 202.12,270.2" fill="#006000"/><polygon points="210.28,263.01 208.78,263.01 207.38,270.2 208.88,270.2" fill="#006000"/><polygon points="203.62,273.8 202.12,273.8 200.72,280.99 202.22,280.99" fill="#006000"/><polygon points="207.38,273.8 208.88,273.8 210.28,280.99 208.78,280.99" fill="#006000"/><polygon points="215.45,260 229.55,260 227.38,262.11 217.62,262.11" fill="#006000"/><polygon points="217.62,281.89 227.38,281.89 229.55,284 215.45,284" fill="#006000"/><polygon points="215,260.45 217.18,262.56 217.18,270.49 215,271.55" fill="#00ff00"/><polygon points="215,272.45 217.18,273.51 217.18,281.44 215,283.55" fill="#006000"/><polygon points="230,260.45 227.82,262.56 227.82,270.49 230,271.55" fill="#00ff00"/><polygon points="230,272.45 227.82,273.51 227.82,281.44 230,283.55" fill="#00ff00"/><polygon points="215.45,272 217.62,271.1 221.08,271.1 221.08,272.9 217.62,272.9" fill="#00ff00"/><polygon points="229.55,272 227.38,271.1 223.92,271.1 223.92,272.9 227.38,272.9" fill="#00ff00"/><polygon points="221.53,262.56 223.47,262.56 223.47,270.65 221.53,270.65" fill="#006000"/><polygon points="221.53,273.35 223.47,273.35 223.47,281.44 221.53,281.44" fill="#006000"/><polygon points="217.72,263.01 219.22,263.01 220.62,270.2 219.12,270.2" fill="#006000"/><polygon points="227.28,263.01 225.78,263.01 224.38,270.2 225.88,270.2" fill="#006000"/><polygon points="220.62,273.8 219.12,273.8 217.72,280.99 219.22,280.99" fill="#006000"/><polygon points="224.38,273.8 225.88,273.8 227.28,280.99 225.78,280.99" fill="#006000"/><rect x="289.5" y="37.5" width="131" height="62" rx="3" fill="none" stroke="#aaa79f" stroke-width="1"/><rect x="293" y="33" width="38" height="8" fill="#edece8"/><text x="295.5" y="43" font-size="12.5" text-anchor="start" font-weight="bold" fill="#000">Pens</text><rect x="297.5" y="54.5" width="11" height="11" fill="#ff4d4d" stroke="#333" stroke-width="1"/><rect x="318.5" y="54.5" width="11" height="11" fill="#e6e6e6" stroke="#666" stroke-width="1"/><path d="M320.5,60 l2.5,3 l5,-7" stroke="#6f7880" stroke-width="2" fill="none"/><text x="334" y="64.7" font-size="12.1" text-anchor="start" font-weight="normal" fill="#000">level_PV</text><path d="M395,55 l10,10 M405,55 l-10,10" stroke="#555" stroke-width="3.2" fill="none"/><path d="M395,55 l10,10 M405,55 l-10,10" stroke="#fff" stroke-width="1.9" fill="none"/><rect x="297.5" y="78.5" width="11" height="11" fill="#5555ff" stroke="#333" stroke-width="1"/><rect x="318.5" y="78.5" width="11" height="11" fill="#e6e6e6" stroke="#666" stroke-width="1"/><path d="M320.5,84 l2.5,3 l5,-7" stroke="#6f7880" stroke-width="2" fill="none"/><text x="334" y="88.7" font-size="12.1" text-anchor="start" font-weight="normal" fill="#000">temp_PV</text><path d="M398,79 l10,10 M408,79 l-10,10" stroke="#555" stroke-width="3.2" fill="none"/><path d="M398,79 l10,10 M408,79 l-10,10" stroke="#fff" stroke-width="1.9" fill="none"/><defs><clipPath id="cc25"><rect x="474.5" y="36.5" width="270" height="214"/></clipPath></defs><rect x="474.5" y="36.5" width="270" height="214" fill="#fff" stroke="#a8a8a8" stroke-width="1"/><line x1="474.5" y1="54.5" x2="744.5" y2="54.5" stroke="#d4d4d4" stroke-width="1" stroke-dasharray="3,3"/><line x1="471.5" y1="54.5" x2="474.5" y2="54.5" stroke="#666" stroke-width="1"/><text x="467.5" y="59.1" font-size="10.5" text-anchor="end" font-weight="normal" fill="#000">65</text><line x1="474.5" y1="83.5" x2="744.5" y2="83.5" stroke="#d4d4d4" stroke-width="1" stroke-dasharray="3,3"/><line x1="471.5" y1="83.5" x2="474.5" y2="83.5" stroke="#666" stroke-width="1"/><text x="467.5" y="88.1" font-size="10.5" text-anchor="end" font-weight="normal" fill="#000">60</text><line x1="474.5" y1="111.5" x2="744.5" y2="111.5" stroke="#d4d4d4" stroke-width="1" stroke-dasharray="3,3"/><line x1="471.5" y1="111.5" x2="474.5" y2="111.5" stroke="#666" stroke-width="1"/><text x="467.5" y="116.1" font-size="10.5" text-anchor="end" font-weight="normal" fill="#000">55</text><line x1="474.5" y1="140.5" x2="744.5" y2="140.5" stroke="#d4d4d4" stroke-width="1" stroke-dasharray="3,3"/><line x1="471.5" y1="140.5" x2="474.5" y2="140.5" stroke="#666" stroke-width="1"/><text x="467.5" y="145.1" font-size="10.5" text-anchor="end" font-weight="normal" fill="#000">50</text><line x1="474.5" y1="168.5" x2="744.5" y2="168.5" stroke="#d4d4d4" stroke-width="1" stroke-dasharray="3,3"/><line x1="471.5" y1="168.5" x2="474.5" y2="168.5" stroke="#666" stroke-width="1"/><text x="467.5" y="173.1" font-size="10.5" text-anchor="end" font-weight="normal" fill="#000">45</text><line x1="474.5" y1="197.5" x2="744.5" y2="197.5" stroke="#d4d4d4" stroke-width="1" stroke-dasharray="3,3"/><line x1="471.5" y1="197.5" x2="474.5" y2="197.5" stroke="#666" stroke-width="1"/><text x="467.5" y="202.1" font-size="10.5" text-anchor="end" font-weight="normal" fill="#000">40</text><line x1="474.5" y1="225.5" x2="744.5" y2="225.5" stroke="#d4d4d4" stroke-width="1" stroke-dasharray="3,3"/><line x1="471.5" y1="225.5" x2="474.5" y2="225.5" stroke="#666" stroke-width="1"/><text x="467.5" y="230.1" font-size="10.5" text-anchor="end" font-weight="normal" fill="#000">35</text><line x1="471.5" y1="254.5" x2="474.5" y2="254.5" stroke="#666" stroke-width="1"/><text x="467.5" y="259.1" font-size="10.5" text-anchor="end" font-weight="normal" fill="#000">30</text><line x1="584.5" y1="36.5" x2="584.5" y2="250.5" stroke="#d4d4d4" stroke-width="1" stroke-dasharray="3,3"/><line x1="584.5" y1="250.5" x2="584.5" y2="253.5" stroke="#333" stroke-width="1"/><line x1="692.5" y1="36.5" x2="692.5" y2="250.5" stroke="#d4d4d4" stroke-width="1" stroke-dasharray="3,3"/><line x1="692.5" y1="250.5" x2="692.5" y2="253.5" stroke="#333" stroke-width="1"/><line x1="474.5" y1="36.5" x2="474.5" y2="251" stroke="#808080" stroke-width="1"/><line x1="474.5" y1="250.5" x2="745" y2="250.5" stroke="#808080" stroke-width="1"/><polyline clip-path="url(#cc25)" points="474.5,72 497,68 516.8,60.7 529,56.5 534.5,57.3 542.2,57.3 546.7,56.5 556.6,59.6 563.3,58.7 571,59.8 583.2,59.8 588.7,58 602,58 609.8,59.8 617.5,58 628.6,53.6 637.5,56.5 646.3,52.5 655.2,48 664,45.8 675,47.6 688.4,50.7 700.6,54.7 718.3,49.4 728.3,51.4 742.7,51.4" fill="none" stroke="#4b4bff" stroke-width="1.1"/><text x="584.5" y="264" font-size="10.5" text-anchor="middle" font-weight="normal" fill="#000">10:54 AM</text><text x="692.5" y="264" font-size="10.5" text-anchor="middle" font-weight="normal" fill="#000">10:56 AM</text><text x="612" y="281.6" font-size="12" text-anchor="middle" font-weight="normal" fill="#333" letter-spacing="0">[ Sep 7, 2016 ]</text><text transform="translate(448,143) rotate(-90)" font-size="12" text-anchor="middle" fill="#000">Value</text><rect x="755.6" y="37.6" width="15" height="15" fill="#fff" stroke="#222" stroke-width="1.2"/><path d="M763,38.6 l-2.8,2.8 h5.6 z M763,51.4 l-2.8,-2.8 h5.6 z M756.6,45 l2.8,-2.8 v5.6 z M769.4,45 l-2.8,-2.8 v5.6 z" fill="#333"/><rect x="755.8" y="67.3" width="14" height="6.3" fill="#d2d2d2" stroke="#333" stroke-width="1.1"/><path d="M758.8,62.3 h6 l2.4,2.4 v6.2 h-8.4 z" fill="#fff" stroke="#444" stroke-width="1"/><path d="M764.8,62.3 l2.4,2.4 h-2.4 z" fill="#777"/><path d="M760.5,66.5 h4.5 M760.5,68.5 h4.5" stroke="#555" stroke-width="0.9"/><rect x="757" y="73.6" width="10.8" height="3.2" fill="#8a8a8a" stroke="#333" stroke-width="1"/><rect x="755" y="87" width="16" height="16" fill="#7a7a7a" stroke="#333" stroke-width="0.8"/><rect x="758" y="88" width="10" height="6" fill="#fff"/><rect x="760" y="98" width="6" height="4" fill="#ddd"/><rect x="762.5" y="98" width="1" height="4" fill="#7a7a7a"/><rect x="323.5" y="295.5" width="62" height="24" rx="3" fill="#edece8" stroke="#958e80" stroke-width="1"/><text x="354.5" y="311.5" font-size="12" text-anchor="middle" font-weight="normal" fill="#8e887a">Apply</text><rect x="339.8" y="313" width="7" height="1" fill="#8e887a"/><text x="480.5" y="314" font-size="12.5" text-anchor="start" font-weight="normal" fill="#000">Last:</text><rect x="517.5" y="298.5" width="55" height="21" rx="2" fill="#fff" stroke="#6d695f" stroke-width="1.2"/><text x="552.3" y="314" font-size="12.5" text-anchor="end" font-weight="normal" fill="#000">5</text><rect x="555.5" y="300.5" width="15" height="8" rx="1.5" fill="#f2f1ee" stroke="#6d695f" stroke-width="1"/><rect x="555.5" y="309.5" width="15" height="8" rx="1.5" fill="#edece8" stroke="#6d695f" stroke-width="1"/><path d="M559.5,306 l3.5,-3.5 l3.5,3.5 z M559.5,312 l3.5,3.5 l3.5,-3.5 z" fill="#555"/><rect x="580.5" y="298.5" width="117" height="21" rx="2" fill="#edece8" stroke="#6d695f" stroke-width="1.2"/><text x="583" y="314" font-size="12.5" text-anchor="start" font-weight="normal" fill="#000">Minutes</text><rect x="678.5" y="300.5" width="17" height="17" rx="1.5" fill="#f6f5f2" stroke="#6d695f" stroke-width="1.2"/><path d="M682.8,307 h8.5 l-4.25,4.25 z" fill="#555"/><defs><linearGradient id="pz26" x1="0" y1="0" x2="0" y2="1"><stop offset="0" stop-color="#8a9aa8"/><stop offset="0.45" stop-color="#1e5a9a"/><stop offset="1" stop-color="#5ab0f5"/></linearGradient></defs><rect x="707" y="301" width="6" height="15.6" rx="3" fill="url(#pz26)" stroke="#0c2c55" stroke-width="1"/><rect x="715" y="301" width="6" height="15.6" rx="3" fill="url(#pz26)" stroke="#0c2c55" stroke-width="1"/></svg><svg style="position:absolute;left:554px;top:319px;z-index:12" width="796" height="363" viewBox="0 0 796 363" font-family='"Liberation Sans", sans-serif'><defs><linearGradient id="tbg27" x1="0" y1="0" x2="0" y2="1"><stop offset="0" stop-color="#c9ccce"/><stop offset="1" stop-color="#a4a8ab"/></linearGradient></defs><rect x="0" y="0" width="796" height="363" fill="#a6aaad"/><rect x="0" y="0" width="1" height="363" fill="#c8cbcd"/><rect x="795" y="0" width="1" height="363" fill="#85898c"/><rect x="0" y="362" width="796" height="1" fill="#85898c"/><rect x="1" y="0" width="794" height="21" fill="url(#tbg27)"/><rect x="1" y="0" width="794" height="1" fill="#c8cbcd" opacity="0.6"/><rect x="4" y="21" width="788" height="1" fill="#888c8f"/><rect x="30" y="5.3" width="341" height="1.2" fill="#adb1b3"/><rect x="30" y="9.3" width="341" height="1.2" fill="#adb1b3"/><rect x="30" y="13.3" width="341" height="1.2" fill="#adb1b3"/><rect x="30" y="8.2" width="341" height="1" fill="#c2c5c7"/><rect x="30" y="12.2" width="341" height="1" fill="#c2c5c7"/><rect x="30" y="16.2" width="341" height="1" fill="#c2c5c7"/><rect x="424" y="5.3" width="324" height="1.2" fill="#adb1b3"/><rect x="424" y="9.3" width="324" height="1.2" fill="#adb1b3"/><rect x="424" y="13.3" width="324" height="1.2" fill="#adb1b3"/><rect x="424" y="8.2" width="324" height="1" fill="#c2c5c7"/><rect x="424" y="12.2" width="324" height="1" fill="#c2c5c7"/><rect x="424" y="16.2" width="324" height="1" fill="#c2c5c7"/><text x="398" y="16" font-size="12" text-anchor="middle" font-weight="bold" fill="#000">Popup</text><defs><linearGradient id="wg28" x1="0" y1="0" x2="1" y2="0"><stop offset="0" stop-color="#9a9c9e"/><stop offset="1" stop-color="#66696c"/></linearGradient></defs><rect x="7" y="3" width="15" height="15" fill="#55585b"/><rect x="8" y="4" width="13" height="3" fill="url(#wg28)"/><rect x="8.5" y="7.5" width="12" height="9.5" fill="#fff"/><defs><linearGradient id="mg29" x1="0" y1="0" x2="1" y2="1"><stop offset="0" stop-color="#3a3a3a"/><stop offset="1" stop-color="#9a9a9a"/></linearGradient></defs><rect x="754" y="3" width="14" height="15" fill="url(#mg29)"/><path d="M758,15 l6,-6 M760,8 h5 v5" stroke="#000" stroke-width="2" fill="none"/><path d="M757,14 l6,-6 M759,7 h5 v5" stroke="#fff" stroke-width="2" fill="none"/><rect x="772" y="3" width="14" height="15" fill="#c85a45"/><path d="M775.6,7.2 l8,8 M783.6,7.2 l-8,8" stroke="#000" stroke-width="2.2" fill="none"/><path d="M775,6.5 l8,8 M783,6.5 l-8,8" stroke="#fff" stroke-width="2.2" fill="none"/><rect x="5" y="22" width="786" height="336" fill="#edece8"/><rect x="4" y="22" width="1" height="336" fill="#85898c"/><rect x="5" y="358" width="786" height="1" fill="#c8cbcd" opacity="0.5"/><rect x="791" y="22" width="1" height="336" fill="#c8cbcd" opacity="0.5"/><rect x="1" y="354" width="2" height="2" fill="#85898c"/><rect x="2" y="355" width="2" height="2" fill="#c8cbcd" opacity="0.8"/><rect x="1" y="359" width="2" height="2" fill="#85898c"/><rect x="2" y="360" width="2" height="2" fill="#c8cbcd" opacity="0.8"/><rect x="6" y="359" width="2" height="2" fill="#85898c"/><rect x="7" y="360" width="2" height="2" fill="#c8cbcd" opacity="0.8"/><rect x="791" y="354" width="2" height="2" fill="#85898c"/><rect x="792" y="355" width="2" height="2" fill="#c8cbcd" opacity="0.8"/><rect x="791" y="359" width="2" height="2" fill="#85898c"/><rect x="792" y="360" width="2" height="2" fill="#c8cbcd" opacity="0.8"/><rect x="786" y="359" width="2" height="2" fill="#85898c"/><rect x="787" y="360" width="2" height="2" fill="#c8cbcd" opacity="0.8"/><text x="128" y="46" font-size="17" text-anchor="middle" font-weight="bold" fill="#000">Tank 102</text><rect x="73" y="224" width="15" height="1.4" fill="#000"/><text x="67" y="227.6" font-size="10" text-anchor="end" fill="#000">0</text><rect x="81" y="216" width="7" height="1.4" fill="#000"/><rect x="81" y="209" width="7" height="1.4" fill="#000"/><rect x="81" y="201" width="7" height="1.4" fill="#000"/><rect x="81" y="194" width="7" height="1.4" fill="#000"/><rect x="73" y="186" width="15" height="1.4" fill="#000"/><text x="67" y="190.1" font-size="10" text-anchor="end" fill="#000">25</text><rect x="81" y="179" width="7" height="1.4" fill="#000"/><rect x="81" y="171" width="7" height="1.4" fill="#000"/><rect x="81" y="164" width="7" height="1.4" fill="#000"/><rect x="81" y="156" width="7" height="1.4" fill="#000"/><rect x="73" y="149" width="15" height="1.4" fill="#000"/><text x="67" y="152.6" font-size="10" text-anchor="end" fill="#000">50</text><rect x="81" y="141" width="7" height="1.4" fill="#000"/><rect x="81" y="134" width="7" height="1.4" fill="#000"/><rect x="81" y="126" width="7" height="1.4" fill="#000"/><rect x="81" y="119" width="7" height="1.4" fill="#000"/><rect x="73" y="111" width="15" height="1.4" fill="#000"/><text x="67" y="115.1" font-size="10" text-anchor="end" fill="#000">75</text><rect x="81" y="104" width="7" height="1.4" fill="#000"/><rect x="81" y="96" width="7" height="1.4" fill="#000"/><rect x="81" y="89" width="7" height="1.4" fill="#000"/><rect x="81" y="81" width="7" height="1.4" fill="#000"/><rect x="73" y="74" width="15" height="1.4" fill="#000"/><text x="67" y="77.6" font-size="10" text-anchor="end" fill="#000">100</text><rect x="58" y="102.9" width="28" height="2.2" fill="#ff0000"/><rect x="58" y="192.9" width="28" height="2.2" fill="#00a800"/><text transform="translate(49.5,104) rotate(-90)" font-size="9.8" text-anchor="middle" fill="#444">High</text><text transform="translate(49.5,194) rotate(-90)" font-size="9.8" text-anchor="middle" fill="#444">Low</text><defs><linearGradient id="tg30" x1="0" x2="1" y1="0" y2="0"><stop offset="0" stop-color="#b2b2b2"/><stop offset="0.38" stop-color="#d6d6d6"/><stop offset="0.6" stop-color="#bdbdbd"/><stop offset="1" stop-color="#939393"/></linearGradient><linearGradient id="tb31" x1="0" x2="1" y1="0" y2="0"><stop offset="0" stop-color="#6a7dbd"/><stop offset="0.38" stop-color="#7b90d6"/><stop offset="0.62" stop-color="#7186c9"/><stop offset="1" stop-color="#56669c"/></linearGradient></defs><path d="M106.5,81.2 L106.5,230.5 A63.5,8.3 0 0 0 233.5,230.5 L233.5,81.2 Z" fill="url(#tg30)"/><path d="M106.5,135.84 L106.5,230.5 A63.5,8.3 0 0 0 233.5,230.5 L233.5,135.84 A63.5,8.3 0 0 0 106.5,135.84 Z" fill="url(#tb31)"/><ellipse cx="170" cy="135.84" rx="63.5" ry="8.3" fill="#b4cdfb"/><path d="M106.5,135.84 A63.5,8.3 0 0 0 233.5,135.84" fill="none" stroke="#222" stroke-width="1.1"/><path d="M106.5,135.84 A63.5,8.3 0 0 1 233.5,135.84" fill="none" stroke="#333" stroke-width="1.1" stroke-dasharray="6,3"/><path d="M106.5,230.5 A63.5,8.3 0 0 1 233.5,230.5" fill="none" stroke="#333" stroke-width="1.1" stroke-dasharray="6,3"/><path d="M106.5,81.2 L106.5,230.5 A63.5,8.3 0 0 0 233.5,230.5 L233.5,81.2" fill="none" stroke="#000" stroke-width="1.25"/><ellipse cx="170" cy="81.2" rx="63.5" ry="8.3" fill="#fff" stroke="#222" stroke-width="1.1"/><text x="168.4" y="161.85" font-size="11.8" text-anchor="middle" fill="#000">63%</text><text x="39.5" y="278.3" font-size="13.6" text-anchor="start" font-weight="bold" fill="#000">Temperature:</text><rect x="138" y="256" width="96" height="32" fill="#424242"/><rect x="138" y="256" width="96" height="2" fill="#1c1c1c"/><rect x="138" y="256" width="2" height="32" fill="#1c1c1c"/><rect x="140" y="286" width="94" height="2" fill="#707070"/><rect x="232" y="258" width="2" height="30" fill="#707070"/><polygon points="159.45,260 173.55,260 171.38,262.11 161.62,262.11" fill="#00ff00"/><polygon points="161.62,281.89 171.38,281.89 173.55,284 159.45,284" fill="#00ff00"/><polygon points="159,260.45 161.18,262.56 161.18,270.49 159,271.55" fill="#00ff00"/><polygon points="159,272.45 161.18,273.51 161.18,281.44 159,283.55" fill="#006000"/><polygon points="174,260.45 171.82,262.56 171.82,270.49 174,271.55" fill="#006000"/><polygon points="174,272.45 171.82,273.51 171.82,281.44 174,283.55" fill="#00ff00"/><polygon points="159.45,272 161.62,271.1 165.08,271.1 165.08,272.9 161.62,272.9" fill="#00ff00"/><polygon points="173.55,272 171.38,271.1 167.92,271.1 167.92,272.9 171.38,272.9" fill="#00ff00"/><polygon points="165.53,262.56 167.47,262.56 167.47,270.65 165.53,270.65" fill="#006000"/><polygon points="165.53,273.35 167.47,273.35 167.47,281.44 165.53,281.44" fill="#006000"/><polygon points="161.72,263.01 163.22,263.01 164.62,270.2 163.12,270.2" fill="#006000"/><polygon points="171.28,263.01 169.78,263.01 168.38,270.2 169.88,270.2" fill="#006000"/><polygon points="164.62,273.8 163.12,273.8 161.72,280.99 163.22,280.99" fill="#006000"/><polygon points="168.38,273.8 169.88,273.8 171.28,280.99 169.78,280.99" fill="#006000"/><polygon points="176.45,260 190.55,260 188.38,262.11 178.62,262.11" fill="#00ff00"/><polygon points="178.62,281.89 188.38,281.89 190.55,284 176.45,284" fill="#00ff00"/><polygon points="176,260.45 178.18,262.56 178.18,270.49 176,271.55" fill="#00ff00"/><polygon points="176,272.45 178.18,273.51 178.18,281.44 176,283.55" fill="#006000"/><polygon points="191,260.45 188.82,262.56 188.82,270.49 191,271.55" fill="#006000"/><polygon points="191,272.45 188.82,273.51 188.82,281.44 191,283.55" fill="#00ff00"/><polygon points="176.45,272 178.62,271.1 182.08,271.1 182.08,272.9 178.62,272.9" fill="#00ff00"/><polygon points="190.55,272 188.38,271.1 184.92,271.1 184.92,272.9 188.38,272.9" fill="#00ff00"/><polygon points="182.53,262.56 184.47,262.56 184.47,270.65 182.53,270.65" fill="#006000"/><polygon points="182.53,273.35 184.47,273.35 184.47,281.44 182.53,281.44" fill="#006000"/><polygon points="178.72,263.01 180.22,263.01 181.62,270.2 180.12,270.2" fill="#006000"/><polygon points="188.28,263.01 186.78,263.01 185.38,270.2 186.88,270.2" fill="#006000"/><polygon points="181.62,273.8 180.12,273.8 178.72,280.99 180.22,280.99" fill="#006000"/><polygon points="185.38,273.8 186.88,273.8 188.28,280.99 186.78,280.99" fill="#006000"/><rect x="193" y="265.52" width="3" height="3" fill="#006300"/><rect x="193" y="274.88" width="3" height="3" fill="#006300"/><rect x="193" y="281" width="3" height="3" fill="#00ff00"/><polygon points="198.45,260 212.55,260 210.38,262.11 200.62,262.11" fill="#00ff00"/><polygon points="200.62,281.89 210.38,281.89 212.55,284 198.45,284" fill="#006000"/><polygon points="198,260.45 200.18,262.56 200.18,270.49 198,271.55" fill="#006000"/><polygon points="198,272.45 200.18,273.51 200.18,281.44 198,283.55" fill="#006000"/><polygon points="213,260.45 210.82,262.56 210.82,270.49 213,271.55" fill="#00ff00"/><polygon points="213,272.45 210.82,273.51 210.82,281.44 213,283.55" fill="#00ff00"/><polygon points="198.45,272 200.62,271.1 204.08,271.1 204.08,272.9 200.62,272.9" fill="#006000"/><polygon points="212.55,272 210.38,271.1 206.92,271.1 206.92,272.9 210.38,272.9" fill="#006000"/><polygon points="204.53,262.56 206.47,262.56 206.47,270.65 204.53,270.65" fill="#006000"/><polygon points="204.53,273.35 206.47,273.35 206.47,281.44 204.53,281.44" fill="#006000"/><polygon points="200.72,263.01 202.22,263.01 203.62,270.2 202.12,270.2" fill="#006000"/><polygon points="210.28,263.01 208.78,263.01 207.38,270.2 208.88,270.2" fill="#006000"/><polygon points="203.62,273.8 202.12,273.8 200.72,280.99 202.22,280.99" fill="#006000"/><polygon points="207.38,273.8 208.88,273.8 210.28,280.99 208.78,280.99" fill="#006000"/><polygon points="215.45,260 229.55,260 227.38,262.11 217.62,262.11" fill="#006000"/><polygon points="217.62,281.89 227.38,281.89 229.55,284 215.45,284" fill="#006000"/><polygon points="215,260.45 217.18,262.56 217.18,270.49 215,271.55" fill="#00ff00"/><polygon points="215,272.45 217.18,273.51 217.18,281.44 215,283.55" fill="#006000"/><polygon points="230,260.45 227.82,262.56 227.82,270.49 230,271.55" fill="#00ff00"/><polygon points="230,272.45 227.82,273.51 227.82,281.44 230,283.55" fill="#00ff00"/><polygon points="215.45,272 217.62,271.1 221.08,271.1 221.08,272.9 217.62,272.9" fill="#00ff00"/><polygon points="229.55,272 227.38,271.1 223.92,271.1 223.92,272.9 227.38,272.9" fill="#00ff00"/><polygon points="221.53,262.56 223.47,262.56 223.47,270.65 221.53,270.65" fill="#006000"/><polygon points="221.53,273.35 223.47,273.35 223.47,281.44 221.53,281.44" fill="#006000"/><polygon points="217.72,263.01 219.22,263.01 220.62,270.2 219.12,270.2" fill="#006000"/><polygon points="227.28,263.01 225.78,263.01 224.38,270.2 225.88,270.2" fill="#006000"/><polygon points="220.62,273.8 219.12,273.8 217.72,280.99 219.22,280.99" fill="#006000"/><polygon points="224.38,273.8 225.88,273.8 227.28,280.99 225.78,280.99" fill="#006000"/><rect x="289.5" y="37.5" width="131" height="62" rx="3" fill="none" stroke="#aaa79f" stroke-width="1"/><rect x="293" y="33" width="38" height="8" fill="#edece8"/><text x="295.5" y="43" font-size="12.5" text-anchor="start" font-weight="bold" fill="#000">Pens</text><rect x="297.5" y="54.5" width="11" height="11" fill="#ff4d4d" stroke="#333" stroke-width="1"/><rect x="318.5" y="54.5" width="11" height="11" fill="#e6e6e6" stroke="#666" stroke-width="1"/><path d="M320.5,60 l2.5,3 l5,-7" stroke="#6f7880" stroke-width="2" fill="none"/><text x="334" y="64.7" font-size="12.1" text-anchor="start" font-weight="normal" fill="#000">level_PV</text><path d="M395,55 l10,10 M405,55 l-10,10" stroke="#555" stroke-width="3.2" fill="none"/><path d="M395,55 l10,10 M405,55 l-10,10" stroke="#fff" stroke-width="1.9" fill="none"/><rect x="297.5" y="78.5" width="11" height="11" fill="#5555ff" stroke="#333" stroke-width="1"/><rect x="318.5" y="78.5" width="11" height="11" fill="#e6e6e6" stroke="#666" stroke-width="1"/><path d="M320.5,84 l2.5,3 l5,-7" stroke="#6f7880" stroke-width="2" fill="none"/><text x="334" y="88.7" font-size="12.1" text-anchor="start" font-weight="normal" fill="#000">temp_PV</text><path d="M398,79 l10,10 M408,79 l-10,10" stroke="#555" stroke-width="3.2" fill="none"/><path d="M398,79 l10,10 M408,79 l-10,10" stroke="#fff" stroke-width="1.9" fill="none"/><defs><clipPath id="cc32"><rect x="474.5" y="36.5" width="270" height="214"/></clipPath></defs><rect x="474.5" y="36.5" width="270" height="214" fill="#fff" stroke="#a8a8a8" stroke-width="1"/><line x1="474.5" y1="41.5" x2="744.5" y2="41.5" stroke="#d4d4d4" stroke-width="1" stroke-dasharray="3,3"/><line x1="471.5" y1="41.5" x2="474.5" y2="41.5" stroke="#666" stroke-width="1"/><text x="467.5" y="46.1" font-size="10.5" text-anchor="end" font-weight="normal" fill="#000">64</text><line x1="474.5" y1="69.5" x2="744.5" y2="69.5" stroke="#d4d4d4" stroke-width="1" stroke-dasharray="3,3"/><line x1="471.5" y1="69.5" x2="474.5" y2="69.5" stroke="#666" stroke-width="1"/><text x="467.5" y="74.1" font-size="10.5" text-anchor="end" font-weight="normal" fill="#000">59</text><line x1="474.5" y1="98.5" x2="744.5" y2="98.5" stroke="#d4d4d4" stroke-width="1" stroke-dasharray="3,3"/><line x1="471.5" y1="98.5" x2="474.5" y2="98.5" stroke="#666" stroke-width="1"/><text x="467.5" y="103.1" font-size="10.5" text-anchor="end" font-weight="normal" fill="#000">54</text><line x1="474.5" y1="126.5" x2="744.5" y2="126.5" stroke="#d4d4d4" stroke-width="1" stroke-dasharray="3,3"/><line x1="471.5" y1="126.5" x2="474.5" y2="126.5" stroke="#666" stroke-width="1"/><text x="467.5" y="131.1" font-size="10.5" text-anchor="end" font-weight="normal" fill="#000">49</text><line x1="474.5" y1="155.5" x2="744.5" y2="155.5" stroke="#d4d4d4" stroke-width="1" stroke-dasharray="3,3"/><line x1="471.5" y1="155.5" x2="474.5" y2="155.5" stroke="#666" stroke-width="1"/><text x="467.5" y="160.1" font-size="10.5" text-anchor="end" font-weight="normal" fill="#000">44</text><line x1="474.5" y1="183.5" x2="744.5" y2="183.5" stroke="#d4d4d4" stroke-width="1" stroke-dasharray="3,3"/><line x1="471.5" y1="183.5" x2="474.5" y2="183.5" stroke="#666" stroke-width="1"/><text x="467.5" y="188.1" font-size="10.5" text-anchor="end" font-weight="normal" fill="#000">39</text><line x1="474.5" y1="212.5" x2="744.5" y2="212.5" stroke="#d4d4d4" stroke-width="1" stroke-dasharray="3,3"/><line x1="471.5" y1="212.5" x2="474.5" y2="212.5" stroke="#666" stroke-width="1"/><text x="467.5" y="217.1" font-size="10.5" text-anchor="end" font-weight="normal" fill="#000">34</text><line x1="474.5" y1="240.5" x2="744.5" y2="240.5" stroke="#d4d4d4" stroke-width="1" stroke-dasharray="3,3"/><line x1="471.5" y1="240.5" x2="474.5" y2="240.5" stroke="#666" stroke-width="1"/><text x="467.5" y="245.1" font-size="10.5" text-anchor="end" font-weight="normal" fill="#000">29</text><line x1="476.5" y1="36.5" x2="476.5" y2="250.5" stroke="#d4d4d4" stroke-width="1" stroke-dasharray="3,3"/><line x1="476.5" y1="250.5" x2="476.5" y2="253.5" stroke="#333" stroke-width="1"/><line x1="584.5" y1="36.5" x2="584.5" y2="250.5" stroke="#d4d4d4" stroke-width="1" stroke-dasharray="3,3"/><line x1="584.5" y1="250.5" x2="584.5" y2="253.5" stroke="#333" stroke-width="1"/><line x1="692.5" y1="36.5" x2="692.5" y2="250.5" stroke="#d4d4d4" stroke-width="1" stroke-dasharray="3,3"/><line x1="692.5" y1="250.5" x2="692.5" y2="253.5" stroke="#333" stroke-width="1"/><line x1="474.5" y1="36.5" x2="474.5" y2="251" stroke="#808080" stroke-width="1"/><line x1="474.5" y1="250.5" x2="745" y2="250.5" stroke="#808080" stroke-width="1"/><polyline clip-path="url(#cc32)" points="474.7,46.5 476.6,47.5 479.9,49.8 483.1,52.4 485.1,53.4 487.7,53.4 489.6,54.3 491.6,54.5 494.5,55.4 496.5,58.6 501,66 516,81 546,101" fill="none" stroke="#ff3b3b" stroke-width="1.1"/><text x="476.5" y="264" font-size="10.5" text-anchor="middle" font-weight="normal" fill="#000">10:54 AM</text><text x="584.5" y="264" font-size="10.5" text-anchor="middle" font-weight="normal" fill="#000">10:56 AM</text><text x="692.5" y="264" font-size="10.5" text-anchor="middle" font-weight="normal" fill="#000">10:58 AM</text><text x="612" y="281.6" font-size="12" text-anchor="middle" font-weight="normal" fill="#333" letter-spacing="0">[ Sep 7, 2016 ]</text><text transform="translate(448,143) rotate(-90)" font-size="12" text-anchor="middle" fill="#000">Value</text><rect x="755.6" y="37.6" width="15" height="15" fill="#fff" stroke="#222" stroke-width="1.2"/><path d="M763,38.6 l-2.8,2.8 h5.6 z M763,51.4 l-2.8,-2.8 h5.6 z M756.6,45 l2.8,-2.8 v5.6 z M769.4,45 l-2.8,-2.8 v5.6 z" fill="#333"/><rect x="755.8" y="67.3" width="14" height="6.3" fill="#d2d2d2" stroke="#333" stroke-width="1.1"/><path d="M758.8,62.3 h6 l2.4,2.4 v6.2 h-8.4 z" fill="#fff" stroke="#444" stroke-width="1"/><path d="M764.8,62.3 l2.4,2.4 h-2.4 z" fill="#777"/><path d="M760.5,66.5 h4.5 M760.5,68.5 h4.5" stroke="#555" stroke-width="0.9"/><rect x="757" y="73.6" width="10.8" height="3.2" fill="#8a8a8a" stroke="#333" stroke-width="1"/><rect x="755" y="87" width="16" height="16" fill="#7a7a7a" stroke="#333" stroke-width="0.8"/><rect x="758" y="88" width="10" height="6" fill="#fff"/><rect x="760" y="98" width="6" height="4" fill="#ddd"/><rect x="762.5" y="98" width="1" height="4" fill="#7a7a7a"/><rect x="323.5" y="295.5" width="62" height="24" rx="3" fill="#edece8" stroke="#958e80" stroke-width="1"/><text x="354.5" y="311.5" font-size="12" text-anchor="middle" font-weight="normal" fill="#8e887a">Apply</text><rect x="339.8" y="313" width="7" height="1" fill="#8e887a"/><text x="480.5" y="314" font-size="12.5" text-anchor="start" font-weight="normal" fill="#000">Last:</text><rect x="517.5" y="298.5" width="55" height="21" rx="2" fill="#fff" stroke="#6d695f" stroke-width="1.2"/><text x="552.3" y="314" font-size="12.5" text-anchor="end" font-weight="normal" fill="#000">5</text><rect x="555.5" y="300.5" width="15" height="8" rx="1.5" fill="#f2f1ee" stroke="#6d695f" stroke-width="1"/><rect x="555.5" y="309.5" width="15" height="8" rx="1.5" fill="#edece8" stroke="#6d695f" stroke-width="1"/><path d="M559.5,306 l3.5,-3.5 l3.5,3.5 z M559.5,312 l3.5,3.5 l3.5,-3.5 z" fill="#555"/><rect x="580.5" y="298.5" width="117" height="21" rx="2" fill="#edece8" stroke="#6d695f" stroke-width="1.2"/><text x="583" y="314" font-size="12.5" text-anchor="start" font-weight="normal" fill="#000">Minutes</text><rect x="678.5" y="300.5" width="17" height="17" rx="1.5" fill="#f6f5f2" stroke="#6d695f" stroke-width="1.2"/><path d="M682.8,307 h8.5 l-4.25,4.25 z" fill="#555"/><defs><linearGradient id="pz33" x1="0" y1="0" x2="0" y2="1"><stop offset="0" stop-color="#8a9aa8"/><stop offset="0.45" stop-color="#1e5a9a"/><stop offset="1" stop-color="#5ab0f5"/></linearGradient></defs><rect x="707" y="301" width="6" height="15.6" rx="3" fill="url(#pz33)" stroke="#0c2c55" stroke-width="1"/><rect x="715" y="301" width="6" height="15.6" rx="3" fill="url(#pz33)" stroke="#0c2c55" stroke-width="1"/></svg><svg style="position:absolute;left:732px;top:378px;z-index:13" width="796" height="363" viewBox="0 0 796 363" font-family='"Liberation Sans", sans-serif'><defs><linearGradient id="tbg34" x1="0" y1="0" x2="0" y2="1"><stop offset="0" stop-color="#a2abb0"/><stop offset="1" stop-color="#748088"/></linearGradient></defs><rect x="0" y="0" width="796" height="363" fill="#77838a"/><rect x="0" y="0" width="1" height="363" fill="#9ca6ab"/><rect x="795" y="0" width="1" height="363" fill="#4e595e"/><rect x="0" y="362" width="796" height="1" fill="#4e595e"/><rect x="1" y="0" width="794" height="21" fill="url(#tbg34)"/><rect x="1" y="0" width="794" height="1" fill="#9ca6ab" opacity="0.6"/><rect x="4" y="21" width="788" height="1" fill="#4b565b"/><rect x="30" y="5.3" width="341" height="1.2" fill="#7e898f"/><rect x="30" y="9.3" width="341" height="1.2" fill="#7e898f"/><rect x="30" y="13.3" width="341" height="1.2" fill="#7e898f"/><rect x="30" y="8.2" width="341" height="1" fill="#96a0a5"/><rect x="30" y="12.2" width="341" height="1" fill="#96a0a5"/><rect x="30" y="16.2" width="341" height="1" fill="#96a0a5"/><rect x="424" y="5.3" width="324" height="1.2" fill="#7e898f"/><rect x="424" y="9.3" width="324" height="1.2" fill="#7e898f"/><rect x="424" y="13.3" width="324" height="1.2" fill="#7e898f"/><rect x="424" y="8.2" width="324" height="1" fill="#96a0a5"/><rect x="424" y="12.2" width="324" height="1" fill="#96a0a5"/><rect x="424" y="16.2" width="324" height="1" fill="#96a0a5"/><text x="398" y="16" font-size="12" text-anchor="middle" font-weight="bold" fill="#000">Popup</text><defs><linearGradient id="wg35" x1="0" y1="0" x2="1" y2="0"><stop offset="0" stop-color="#9a9c9e"/><stop offset="1" stop-color="#66696c"/></linearGradient></defs><rect x="7" y="3" width="15" height="15" fill="#55585b"/><rect x="8" y="4" width="13" height="3" fill="url(#wg35)"/><rect x="8.5" y="7.5" width="12" height="9.5" fill="#fff"/><defs><linearGradient id="mg36" x1="0" y1="0" x2="1" y2="1"><stop offset="0" stop-color="#3a3a3a"/><stop offset="1" stop-color="#9a9a9a"/></linearGradient></defs><rect x="754" y="3" width="14" height="15" fill="url(#mg36)"/><path d="M758,15 l6,-6 M760,8 h5 v5" stroke="#000" stroke-width="2" fill="none"/><path d="M757,14 l6,-6 M759,7 h5 v5" stroke="#fff" stroke-width="2" fill="none"/><rect x="772" y="3" width="14" height="15" fill="#c85a45"/><path d="M775.6,7.2 l8,8 M783.6,7.2 l-8,8" stroke="#000" stroke-width="2.2" fill="none"/><path d="M775,6.5 l8,8 M783,6.5 l-8,8" stroke="#fff" stroke-width="2.2" fill="none"/><rect x="5" y="22" width="786" height="336" fill="#edece8"/><rect x="4" y="22" width="1" height="336" fill="#4e595e"/><rect x="5" y="358" width="786" height="1" fill="#9ca6ab" opacity="0.5"/><rect x="791" y="22" width="1" height="336" fill="#9ca6ab" opacity="0.5"/><rect x="1" y="354" width="2" height="2" fill="#4e595e"/><rect x="2" y="355" width="2" height="2" fill="#9ca6ab" opacity="0.8"/><rect x="1" y="359" width="2" height="2" fill="#4e595e"/><rect x="2" y="360" width="2" height="2" fill="#9ca6ab" opacity="0.8"/><rect x="6" y="359" width="2" height="2" fill="#4e595e"/><rect x="7" y="360" width="2" height="2" fill="#9ca6ab" opacity="0.8"/><rect x="791" y="354" width="2" height="2" fill="#4e595e"/><rect x="792" y="355" width="2" height="2" fill="#9ca6ab" opacity="0.8"/><rect x="791" y="359" width="2" height="2" fill="#4e595e"/><rect x="792" y="360" width="2" height="2" fill="#9ca6ab" opacity="0.8"/><rect x="786" y="359" width="2" height="2" fill="#4e595e"/><rect x="787" y="360" width="2" height="2" fill="#9ca6ab" opacity="0.8"/><text x="128" y="46" font-size="17" text-anchor="middle" font-weight="bold" fill="#000">Tank 103</text><rect x="73" y="224" width="15" height="1.4" fill="#000"/><text x="67" y="227.6" font-size="10" text-anchor="end" fill="#000">0</text><rect x="81" y="216" width="7" height="1.4" fill="#000"/><rect x="81" y="209" width="7" height="1.4" fill="#000"/><rect x="81" y="201" width="7" height="1.4" fill="#000"/><rect x="81" y="194" width="7" height="1.4" fill="#000"/><rect x="73" y="186" width="15" height="1.4" fill="#000"/><text x="67" y="190.1" font-size="10" text-anchor="end" fill="#000">25</text><rect x="81" y="179" width="7" height="1.4" fill="#000"/><rect x="81" y="171" width="7" height="1.4" fill="#000"/><rect x="81" y="164" width="7" height="1.4" fill="#000"/><rect x="81" y="156" width="7" height="1.4" fill="#000"/><rect x="73" y="149" width="15" height="1.4" fill="#000"/><text x="67" y="152.6" font-size="10" text-anchor="end" fill="#000">50</text><rect x="81" y="141" width="7" height="1.4" fill="#000"/><rect x="81" y="134" width="7" height="1.4" fill="#000"/><rect x="81" y="126" width="7" height="1.4" fill="#000"/><rect x="81" y="119" width="7" height="1.4" fill="#000"/><rect x="73" y="111" width="15" height="1.4" fill="#000"/><text x="67" y="115.1" font-size="10" text-anchor="end" fill="#000">75</text><rect x="81" y="104" width="7" height="1.4" fill="#000"/><rect x="81" y="96" width="7" height="1.4" fill="#000"/><rect x="81" y="89" width="7" height="1.4" fill="#000"/><rect x="81" y="81" width="7" height="1.4" fill="#000"/><rect x="73" y="74" width="15" height="1.4" fill="#000"/><text x="67" y="77.6" font-size="10" text-anchor="end" fill="#000">100</text><rect x="58" y="102.9" width="28" height="2.2" fill="#ff0000"/><rect x="58" y="192.9" width="28" height="2.2" fill="#00a800"/><text transform="translate(49.5,104) rotate(-90)" font-size="9.8" text-anchor="middle" fill="#444">High</text><text transform="translate(49.5,194) rotate(-90)" font-size="9.8" text-anchor="middle" fill="#444">Low</text><defs><linearGradient id="tg37" x1="0" x2="1" y1="0" y2="0"><stop offset="0" stop-color="#b2b2b2"/><stop offset="0.38" stop-color="#d6d6d6"/><stop offset="0.6" stop-color="#bdbdbd"/><stop offset="1" stop-color="#939393"/></linearGradient><linearGradient id="tb38" x1="0" x2="1" y1="0" y2="0"><stop offset="0" stop-color="#6a7dbd"/><stop offset="0.38" stop-color="#7b90d6"/><stop offset="0.62" stop-color="#7186c9"/><stop offset="1" stop-color="#56669c"/></linearGradient></defs><path d="M106.5,81.2 L106.5,230.5 A63.5,8.3 0 0 0 233.5,230.5 L233.5,81.2 Z" fill="url(#tg37)"/><path d="M106.5,209.6 L106.5,230.5 A63.5,8.3 0 0 0 233.5,230.5 L233.5,209.6 A63.5,8.3 0 0 0 106.5,209.6 Z" fill="url(#tb38)"/><ellipse cx="170" cy="209.6" rx="63.5" ry="8.3" fill="#b4cdfb"/><path d="M106.5,209.6 A63.5,8.3 0 0 0 233.5,209.6" fill="none" stroke="#222" stroke-width="1.1"/><path d="M106.5,209.6 A63.5,8.3 0 0 1 233.5,209.6" fill="none" stroke="#333" stroke-width="1.1" stroke-dasharray="6,3"/><path d="M106.5,230.5 A63.5,8.3 0 0 1 233.5,230.5" fill="none" stroke="#333" stroke-width="1.1" stroke-dasharray="6,3"/><path d="M106.5,81.2 L106.5,230.5 A63.5,8.3 0 0 0 233.5,230.5 L233.5,81.2" fill="none" stroke="#000" stroke-width="1.25"/><ellipse cx="170" cy="81.2" rx="63.5" ry="8.3" fill="#fff" stroke="#222" stroke-width="1.1"/><text x="168.4" y="161.85" font-size="11.8" text-anchor="middle" fill="#000">14%</text><text x="39.5" y="278.3" font-size="13.6" text-anchor="start" font-weight="bold" fill="#000">Temperature:</text><rect x="138" y="256" width="96" height="32" fill="#424242"/><rect x="138" y="256" width="96" height="2" fill="#1c1c1c"/><rect x="138" y="256" width="2" height="32" fill="#1c1c1c"/><rect x="140" y="286" width="94" height="2" fill="#707070"/><rect x="232" y="258" width="2" height="30" fill="#707070"/><polygon points="159.45,260 173.55,260 171.38,262.11 161.62,262.11" fill="#00ff00"/><polygon points="161.62,281.89 171.38,281.89 173.55,284 159.45,284" fill="#006000"/><polygon points="159,260.45 161.18,262.56 161.18,270.49 159,271.55" fill="#006000"/><polygon points="159,272.45 161.18,273.51 161.18,281.44 159,283.55" fill="#006000"/><polygon points="174,260.45 171.82,262.56 171.82,270.49 174,271.55" fill="#00ff00"/><polygon points="174,272.45 171.82,273.51 171.82,281.44 174,283.55" fill="#00ff00"/><polygon points="159.45,272 161.62,271.1 165.08,271.1 165.08,272.9 161.62,272.9" fill="#006000"/><polygon points="173.55,272 171.38,271.1 167.92,271.1 167.92,272.9 171.38,272.9" fill="#006000"/><polygon points="165.53,262.56 167.47,262.56 167.47,270.65 165.53,270.65" fill="#006000"/><polygon points="165.53,273.35 167.47,273.35 167.47,281.44 165.53,281.44" fill="#006000"/><polygon points="161.72,263.01 163.22,263.01 164.62,270.2 163.12,270.2" fill="#006000"/><polygon points="171.28,263.01 169.78,263.01 168.38,270.2 169.88,270.2" fill="#006000"/><polygon points="164.62,273.8 163.12,273.8 161.72,280.99 163.22,280.99" fill="#006000"/><polygon points="168.38,273.8 169.88,273.8 171.28,280.99 169.78,280.99" fill="#006000"/><polygon points="176.45,260 190.55,260 188.38,262.11 178.62,262.11" fill="#00ff00"/><polygon points="178.62,281.89 188.38,281.89 190.55,284 176.45,284" fill="#00ff00"/><polygon points="176,260.45 178.18,262.56 178.18,270.49 176,271.55" fill="#00ff00"/><polygon points="176,272.45 178.18,273.51 178.18,281.44 176,283.55" fill="#006000"/><polygon points="191,260.45 188.82,262.56 188.82,270.49 191,271.55" fill="#00ff00"/><polygon points="191,272.45 188.82,273.51 188.82,281.44 191,283.55" fill="#00ff00"/><polygon points="176.45,272 178.62,271.1 182.08,271.1 182.08,272.9 178.62,272.9" fill="#00ff00"/><polygon points="190.55,272 188.38,271.1 184.92,271.1 184.92,272.9 188.38,272.9" fill="#00ff00"/><polygon points="182.53,262.56 184.47,262.56 184.47,270.65 182.53,270.65" fill="#006000"/><polygon points="182.53,273.35 184.47,273.35 184.47,281.44 182.53,281.44" fill="#006000"/><polygon points="178.72,263.01 180.22,263.01 181.62,270.2 180.12,270.2" fill="#006000"/><polygon points="188.28,263.01 186.78,263.01 185.38,270.2 186.88,270.2" fill="#006000"/><polygon points="181.62,273.8 180.12,273.8 178.72,280.99 180.22,280.99" fill="#006000"/><polygon points="185.38,273.8 186.88,273.8 188.28,280.99 186.78,280.99" fill="#006000"/><rect x="193" y="265.52" width="3" height="3" fill="#006300"/><rect x="193" y="274.88" width="3" height="3" fill="#006300"/><rect x="193" y="281" width="3" height="3" fill="#00ff00"/><polygon points="198.45,260 212.55,260 210.38,262.11 200.62,262.11" fill="#00ff00"/><polygon points="200.62,281.89 210.38,281.89 212.55,284 198.45,284" fill="#00ff00"/><polygon points="198,260.45 200.18,262.56 200.18,270.49 198,271.55" fill="#00ff00"/><polygon points="198,272.45 200.18,273.51 200.18,281.44 198,283.55" fill="#00ff00"/><polygon points="213,260.45 210.82,262.56 210.82,270.49 213,271.55" fill="#00ff00"/><polygon points="213,272.45 210.82,273.51 210.82,281.44 213,283.55" fill="#00ff00"/><polygon points="198.45,272 200.62,271.1 204.08,271.1 204.08,272.9 200.62,272.9" fill="#00ff00"/><polygon points="212.55,272 210.38,271.1 206.92,271.1 206.92,272.9 210.38,272.9" fill="#00ff00"/><polygon points="204.53,262.56 206.47,262.56 206.47,270.65 204.53,270.65" fill="#006000"/><polygon points="204.53,273.35 206.47,273.35 206.47,281.44 204.53,281.44" fill="#006000"/><polygon points="200.72,263.01 202.22,263.01 203.62,270.2 202.12,270.2" fill="#006000"/><polygon points="210.28,263.01 208.78,263.01 207.38,270.2 208.88,270.2" fill="#006000"/><polygon points="203.62,273.8 202.12,273.8 200.72,280.99 202.22,280.99" fill="#006000"/><polygon points="207.38,273.8 208.88,273.8 210.28,280.99 208.78,280.99" fill="#006000"/><polygon points="215.45,260 229.55,260 227.38,262.11 217.62,262.11" fill="#00ff00"/><polygon points="217.62,281.89 227.38,281.89 229.55,284 215.45,284" fill="#00ff00"/><polygon points="215,260.45 217.18,262.56 217.18,270.49 215,271.55" fill="#00ff00"/><polygon points="215,272.45 217.18,273.51 217.18,281.44 215,283.55" fill="#006000"/><polygon points="230,260.45 227.82,262.56 227.82,270.49 230,271.55" fill="#006000"/><polygon points="230,272.45 227.82,273.51 227.82,281.44 230,283.55" fill="#00ff00"/><polygon points="215.45,272 217.62,271.1 221.08,271.1 221.08,272.9 217.62,272.9" fill="#00ff00"/><polygon points="229.55,272 227.38,271.1 223.92,271.1 223.92,272.9 227.38,272.9" fill="#00ff00"/><polygon points="221.53,262.56 223.47,262.56 223.47,270.65 221.53,270.65" fill="#006000"/><polygon points="221.53,273.35 223.47,273.35 223.47,281.44 221.53,281.44" fill="#006000"/><polygon points="217.72,263.01 219.22,263.01 220.62,270.2 219.12,270.2" fill="#006000"/><polygon points="227.28,263.01 225.78,263.01 224.38,270.2 225.88,270.2" fill="#006000"/><polygon points="220.62,273.8 219.12,273.8 217.72,280.99 219.22,280.99" fill="#006000"/><polygon points="224.38,273.8 225.88,273.8 227.28,280.99 225.78,280.99" fill="#006000"/><rect x="289.5" y="37.5" width="131" height="62" rx="3" fill="none" stroke="#aaa79f" stroke-width="1"/><rect x="293" y="33" width="38" height="8" fill="#edece8"/><text x="295.5" y="43" font-size="12.5" text-anchor="start" font-weight="bold" fill="#000">Pens</text><rect x="297.5" y="54.5" width="11" height="11" fill="#ff4d4d" stroke="#333" stroke-width="1"/><rect x="318.5" y="54.5" width="11" height="11" fill="#e6e6e6" stroke="#666" stroke-width="1"/><path d="M320.5,60 l2.5,3 l5,-7" stroke="#6f7880" stroke-width="2" fill="none"/><text x="334" y="64.7" font-size="12.1" text-anchor="start" font-weight="normal" fill="#000">level_PV</text><path d="M395,55 l10,10 M405,55 l-10,10" stroke="#555" stroke-width="3.2" fill="none"/><path d="M395,55 l10,10 M405,55 l-10,10" stroke="#fff" stroke-width="1.9" fill="none"/><rect x="297.5" y="78.5" width="11" height="11" fill="#5555ff" stroke="#333" stroke-width="1"/><rect x="318.5" y="78.5" width="11" height="11" fill="#e6e6e6" stroke="#666" stroke-width="1"/><path d="M320.5,84 l2.5,3 l5,-7" stroke="#6f7880" stroke-width="2" fill="none"/><text x="334" y="88.7" font-size="12.1" text-anchor="start" font-weight="normal" fill="#000">temp_PV</text><path d="M398,79 l10,10 M408,79 l-10,10" stroke="#555" stroke-width="3.2" fill="none"/><path d="M398,79 l10,10 M408,79 l-10,10" stroke="#fff" stroke-width="1.9" fill="none"/><defs><clipPath id="cc39"><rect x="474.5" y="36.5" width="270" height="214"/></clipPath></defs><rect x="474.5" y="36.5" width="270" height="214" fill="#fff" stroke="#a8a8a8" stroke-width="1"/><line x1="474.5" y1="50.5" x2="744.5" y2="50.5" stroke="#d4d4d4" stroke-width="1" stroke-dasharray="3,3"/><line x1="471.5" y1="50.5" x2="474.5" y2="50.5" stroke="#666" stroke-width="1"/><text x="467.5" y="55.1" font-size="10.5" text-anchor="end" font-weight="normal" fill="#000">80</text><line x1="474.5" y1="79.5" x2="744.5" y2="79.5" stroke="#d4d4d4" stroke-width="1" stroke-dasharray="3,3"/><line x1="471.5" y1="79.5" x2="474.5" y2="79.5" stroke="#666" stroke-width="1"/><text x="467.5" y="84.1" font-size="10.5" text-anchor="end" font-weight="normal" fill="#000">70</text><line x1="474.5" y1="107.5" x2="744.5" y2="107.5" stroke="#d4d4d4" stroke-width="1" stroke-dasharray="3,3"/><line x1="471.5" y1="107.5" x2="474.5" y2="107.5" stroke="#666" stroke-width="1"/><text x="467.5" y="112.1" font-size="10.5" text-anchor="end" font-weight="normal" fill="#000">60</text><line x1="474.5" y1="136.5" x2="744.5" y2="136.5" stroke="#d4d4d4" stroke-width="1" stroke-dasharray="3,3"/><line x1="471.5" y1="136.5" x2="474.5" y2="136.5" stroke="#666" stroke-width="1"/><text x="467.5" y="141.1" font-size="10.5" text-anchor="end" font-weight="normal" fill="#000">50</text><line x1="474.5" y1="164.5" x2="744.5" y2="164.5" stroke="#d4d4d4" stroke-width="1" stroke-dasharray="3,3"/><line x1="471.5" y1="164.5" x2="474.5" y2="164.5" stroke="#666" stroke-width="1"/><text x="467.5" y="169.1" font-size="10.5" text-anchor="end" font-weight="normal" fill="#000">40</text><line x1="474.5" y1="193.5" x2="744.5" y2="193.5" stroke="#d4d4d4" stroke-width="1" stroke-dasharray="3,3"/><line x1="471.5" y1="193.5" x2="474.5" y2="193.5" stroke="#666" stroke-width="1"/><text x="467.5" y="198.1" font-size="10.5" text-anchor="end" font-weight="normal" fill="#000">30</text><line x1="474.5" y1="221.5" x2="744.5" y2="221.5" stroke="#d4d4d4" stroke-width="1" stroke-dasharray="3,3"/><line x1="471.5" y1="221.5" x2="474.5" y2="221.5" stroke="#666" stroke-width="1"/><text x="467.5" y="226.1" font-size="10.5" text-anchor="end" font-weight="normal" fill="#000">20</text><line x1="474.5" y1="250.5" x2="744.5" y2="250.5" stroke="#d4d4d4" stroke-width="1" stroke-dasharray="3,3"/><line x1="471.5" y1="250.5" x2="474.5" y2="250.5" stroke="#666" stroke-width="1"/><text x="467.5" y="255.1" font-size="10.5" text-anchor="end" font-weight="normal" fill="#000">10</text><line x1="476.5" y1="36.5" x2="476.5" y2="250.5" stroke="#d4d4d4" stroke-width="1" stroke-dasharray="3,3"/><line x1="476.5" y1="250.5" x2="476.5" y2="253.5" stroke="#333" stroke-width="1"/><line x1="584.5" y1="36.5" x2="584.5" y2="250.5" stroke="#d4d4d4" stroke-width="1" stroke-dasharray="3,3"/><line x1="584.5" y1="250.5" x2="584.5" y2="253.5" stroke="#333" stroke-width="1"/><line x1="692.5" y1="36.5" x2="692.5" y2="250.5" stroke="#d4d4d4" stroke-width="1" stroke-dasharray="3,3"/><line x1="692.5" y1="250.5" x2="692.5" y2="253.5" stroke="#333" stroke-width="1"/><line x1="474.5" y1="36.5" x2="474.5" y2="251" stroke="#808080" stroke-width="1"/><line x1="474.5" y1="250.5" x2="745" y2="250.5" stroke="#808080" stroke-width="1"/><polyline clip-path="url(#cc39)" points="474.7,227.4 484.8,227.8 489,229.2 494.5,230.5 497.2,229.2 506.5,229 507.6,228.2 515.2,228.2 522.7,229.4 528.3,231.2 538,229.4 551.4,229.4 567,231.6 582.7,235 589.4,233.8 598.3,234.5 614,236.3 623,236.7 628.5,239.4 636.3,236.3 647.5,235.2 672,236.3 683,239 692.2,240.5 701,237.9 710,237 716.8,239 728,240.5 742.5,240.5" fill="none" stroke="#ff3b3b" stroke-width="1.1"/><polyline clip-path="url(#cc39)" points="474.7,50 489.2,49.5 498.2,48 504.9,46.6 511.6,45 522.7,47.3 538,48.8 549.2,50.6 562.6,52.9 571.5,52.9 582.7,51.7 600.6,51.7 609.5,49.5 619.6,51 629.6,49.5 643,51.3 652,50.6 665.4,52.4 672,51.3 690,52.4 742.5,52.4" fill="none" stroke="#4b4bff" stroke-width="1.1"/><text x="476.5" y="264" font-size="10.5" text-anchor="middle" font-weight="normal" fill="#000">10:54 AM</text><text x="584.5" y="264" font-size="10.5" text-anchor="middle" font-weight="normal" fill="#000">10:56 AM</text><text x="692.5" y="264" font-size="10.5" text-anchor="middle" font-weight="normal" fill="#000">10:58 AM</text><text x="612" y="281.6" font-size="12" text-anchor="middle" font-weight="normal" fill="#333" letter-spacing="0">[ Sep 7, 2016 ]</text><text transform="translate(448,143) rotate(-90)" font-size="12" text-anchor="middle" fill="#000">Value</text><rect x="755.6" y="37.6" width="15" height="15" fill="#fff" stroke="#222" stroke-width="1.2"/><path d="M763,38.6 l-2.8,2.8 h5.6 z M763,51.4 l-2.8,-2.8 h5.6 z M756.6,45 l2.8,-2.8 v5.6 z M769.4,45 l-2.8,-2.8 v5.6 z" fill="#333"/><rect x="755.8" y="67.3" width="14" height="6.3" fill="#d2d2d2" stroke="#333" stroke-width="1.1"/><path d="M758.8,62.3 h6 l2.4,2.4 v6.2 h-8.4 z" fill="#fff" stroke="#444" stroke-width="1"/><path d="M764.8,62.3 l2.4,2.4 h-2.4 z" fill="#777"/><path d="M760.5,66.5 h4.5 M760.5,68.5 h4.5" stroke="#555" stroke-width="0.9"/><rect x="757" y="73.6" width="10.8" height="3.2" fill="#8a8a8a" stroke="#333" stroke-width="1"/><rect x="755" y="87" width="16" height="16" fill="#7a7a7a" stroke="#333" stroke-width="0.8"/><rect x="758" y="88" width="10" height="6" fill="#fff"/><rect x="760" y="98" width="6" height="4" fill="#ddd"/><rect x="762.5" y="98" width="1" height="4" fill="#7a7a7a"/><rect x="323.5" y="295.5" width="62" height="24" rx="3" fill="#edece8" stroke="#958e80" stroke-width="1"/><text x="354.5" y="311.5" font-size="12" text-anchor="middle" font-weight="normal" fill="#8e887a">Apply</text><rect x="339.8" y="313" width="7" height="1" fill="#8e887a"/><text x="480.5" y="314" font-size="12.5" text-anchor="start" font-weight="normal" fill="#000">Last:</text><rect x="517.5" y="298.5" width="55" height="21" rx="2" fill="#fff" stroke="#6d695f" stroke-width="1.2"/><text x="552.3" y="314" font-size="12.5" text-anchor="end" font-weight="normal" fill="#000">5</text><rect x="555.5" y="300.5" width="15" height="8" rx="1.5" fill="#f2f1ee" stroke="#6d695f" stroke-width="1"/><rect x="555.5" y="309.5" width="15" height="8" rx="1.5" fill="#edece8" stroke="#6d695f" stroke-width="1"/><path d="M559.5,306 l3.5,-3.5 l3.5,3.5 z M559.5,312 l3.5,3.5 l3.5,-3.5 z" fill="#555"/><rect x="580.5" y="298.5" width="117" height="21" rx="2" fill="#edece8" stroke="#6d695f" stroke-width="1.2"/><text x="583" y="314" font-size="12.5" text-anchor="start" font-weight="normal" fill="#000">Minutes</text><rect x="678.5" y="300.5" width="17" height="17" rx="1.5" fill="#f6f5f2" stroke="#6d695f" stroke-width="1.2"/><path d="M682.8,307 h8.5 l-4.25,4.25 z" fill="#555"/><defs><linearGradient id="pz40" x1="0" y1="0" x2="0" y2="1"><stop offset="0" stop-color="#8a9aa8"/><stop offset="0.45" stop-color="#1e5a9a"/><stop offset="1" stop-color="#5ab0f5"/></linearGradient></defs><rect x="707" y="301" width="6" height="15.6" rx="3" fill="url(#pz40)" stroke="#0c2c55" stroke-width="1"/><rect x="715" y="301" width="6" height="15.6" rx="3" fill="url(#pz40)" stroke="#0c2c55" stroke-width="1"/></svg></body></html>
